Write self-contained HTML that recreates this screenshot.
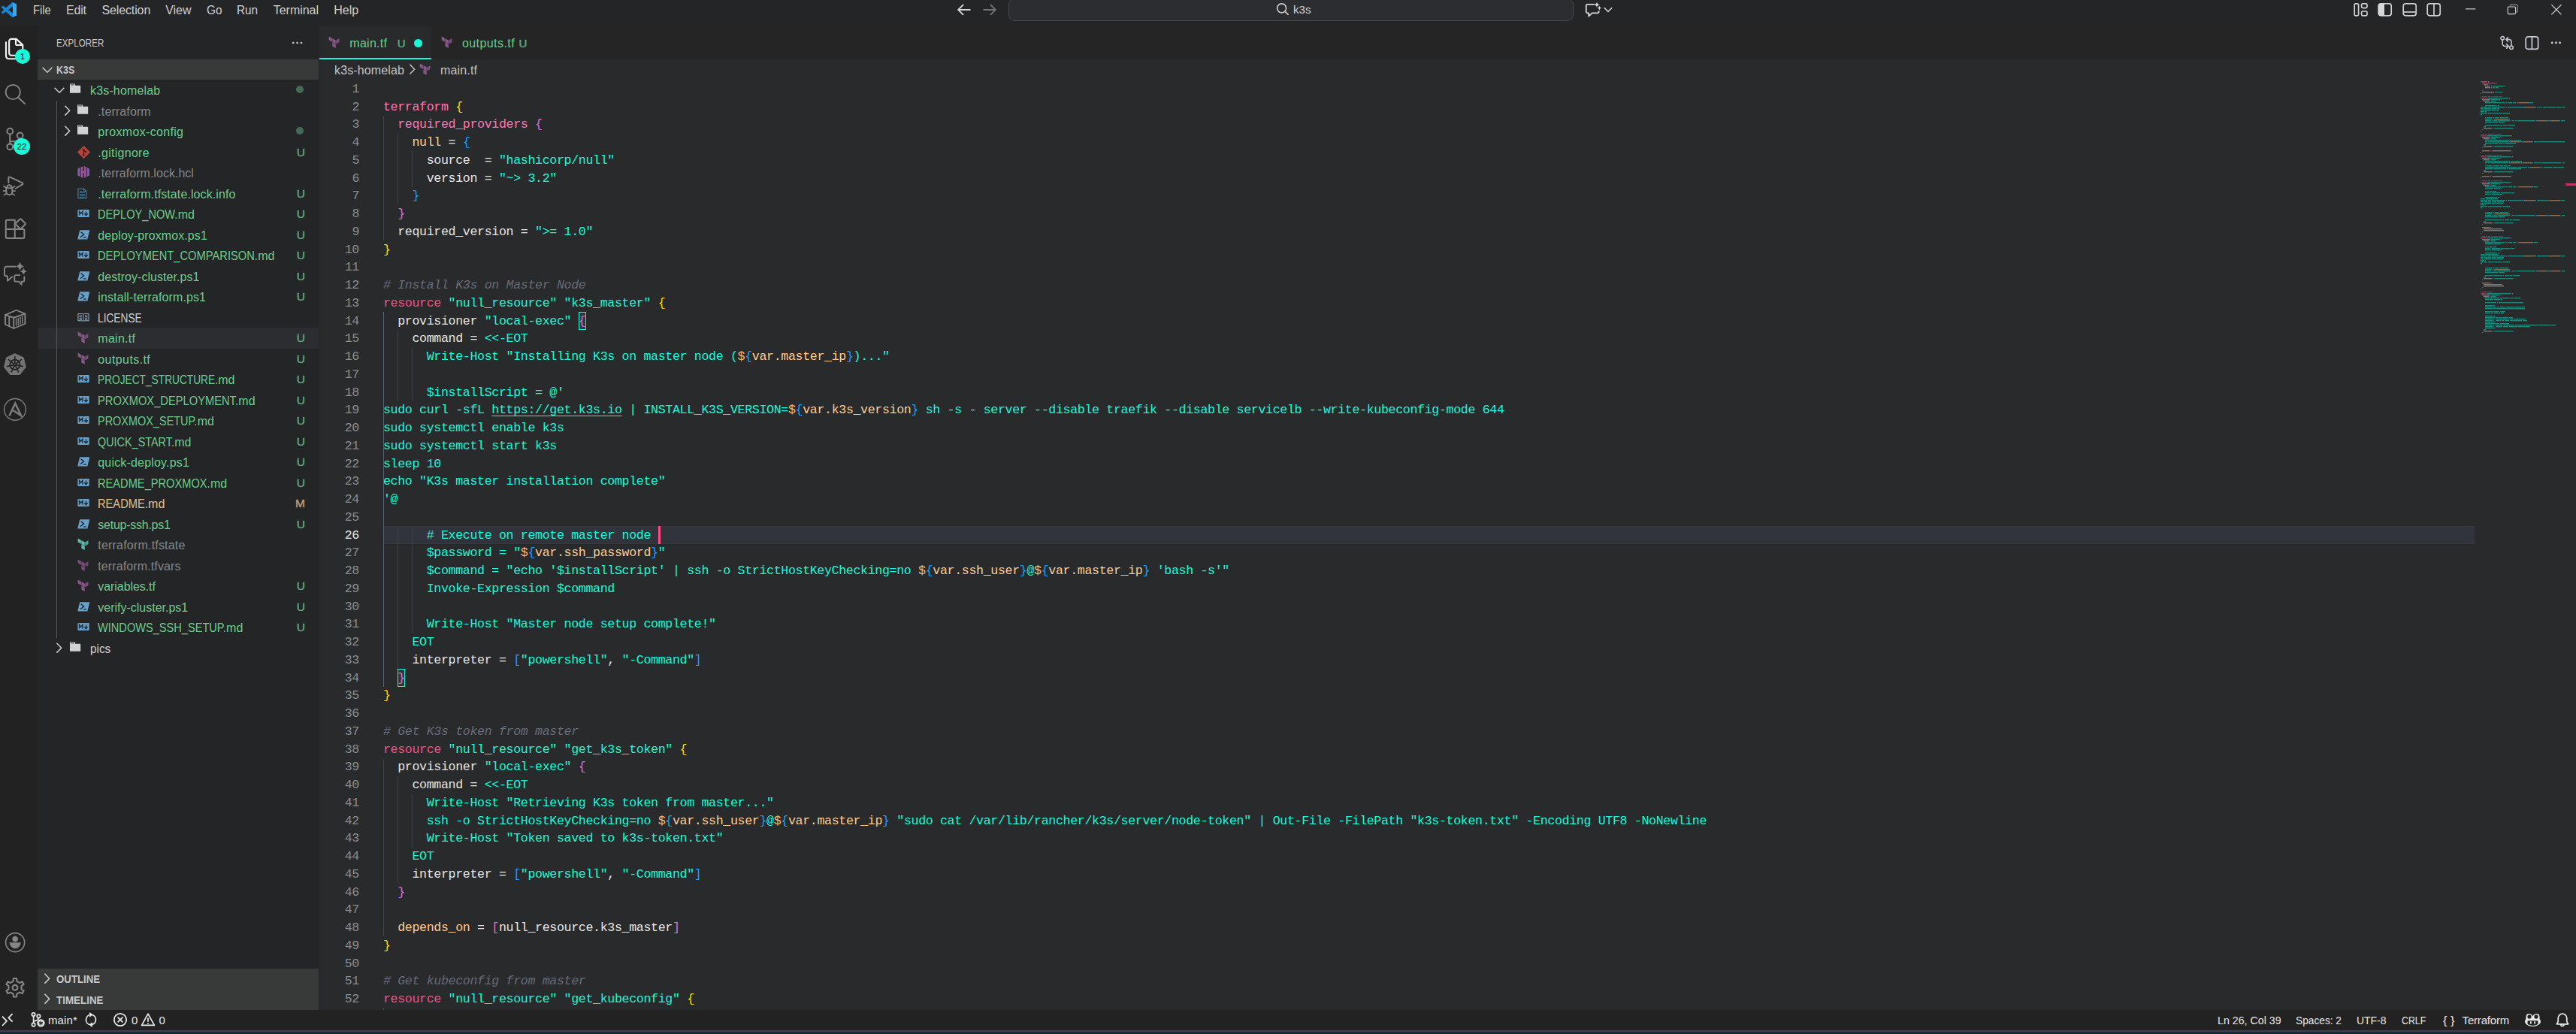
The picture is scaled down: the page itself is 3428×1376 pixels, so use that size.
<!DOCTYPE html>
<html lang="en"><head><meta charset="utf-8"><title>main.tf - k3s - Visual Studio Code</title>
<style>
html,body{margin:0;padding:0;background:#142a34;}
body{width:3428px;height:1376px;overflow:hidden;font-family:"Liberation Sans",sans-serif;}
#app{position:relative;width:3428px;height:1376px;overflow:hidden;background:#292a2b;}
#app div,#app span,#app svg{position:absolute;box-sizing:border-box;}
#app span{white-space:pre;}
.cl span{position:static !important;}

/* title bar */
#titlebar{left:0;top:0;width:3428px;height:35px;background:#242527;}
.menu{top:3px;height:22px;line-height:22px;font-size:16px;color:#cfcfcf;}
#cmdcenter{left:1342px;top:-2px;width:752px;height:29.5px;border:1px solid #47484b;border-radius:8px;background:#2c2d30;}
.cc-text{left:378px;top:4px;line-height:20px;font-size:15.2px;color:#d0d0d0;}

/* activity bar */
#activitybar{left:0;top:35px;width:50px;height:1309px;background:#222222;}
.badge{border-radius:50%;background:#19f9d8;color:#111;font-size:11.5px;text-align:center;}

/* side bar */
#sidebar{left:50px;top:35px;width:375px;height:1309px;background:#242526;}
.sb-title{left:25px;top:10.6px;line-height:22px;font-size:13.6px;color:#c8c8c8;letter-spacing:0.1px;}
.sb-more{left:338px;top:14px;width:16px;height:16px;}
.pane-h{left:0;width:374px;height:27.5px;background:#383a39;}
.pane-t{left:25px;top:1.4px;line-height:27.5px;font-size:13.5px;font-weight:bold;color:#c8c8c8;}
#tree{left:0;top:71.25px;width:374px;height:780px;}
.row{left:0;width:374px;height:27.5px;}
.row.sel{background:#2c2d30;}
.fn{top:1px;line-height:27.5px;font-size:16px;}
.fi{top:3px;width:20px;height:20px;}
.tw{top:4px;width:20px;height:20px;}
.g{color:#6dcd8f;}
.dim{color:#85878a;}
.n{color:#cfcfcf;}
.m{color:#e2c08d;}
.bdg{left:336px;top:0;width:20px;text-align:right;line-height:27.5px;font-size:15.5px;-webkit-text-stroke:0.5px currentColor;}
.bdg.g{color:#5fa57a;}
.bdg.m{color:#b89c72;}
.bdot{left:343.7px;top:8px;width:10px;height:10px;border-radius:50%;background:#456b56;}
.guide{left:24.9px;top:27.5px;width:1px;height:715px;background:#56575a;z-index:2;}

/* tabs */
#tabs{left:425px;top:35px;width:3003px;height:43.75px;background:#252526;}
.tab{top:0;height:43.75px;}
.tab.active{background:#292a2b;border-bottom:2.5px solid #19f9d8;}
.ti{top:10.8px;width:20px;height:20px;}
.tl{top:0;line-height:45px;font-size:16px;color:#6dcd8f;}
.tu{top:-0.5px;line-height:45px;font-size:15px;color:#5fa57a;-webkit-text-stroke:0.5px currentColor;}
.tdot{left:126px;top:16.5px;width:11px;height:11px;border-radius:50%;background:#19f9d8;}

/* breadcrumbs */
#crumbs{left:425px;top:78.75px;width:3003px;height:27.5px;background:#292a2b;}
.cr{top:1px;line-height:27.5px;font-size:16px;color:#c4c4c4;letter-spacing:-0.15px;}
.crsep{left:113.5px;top:4px;width:20px;height:20px;}
.cri{left:133px;top:3.5px;width:20px;height:20px;}

/* editor */
#editor{left:425px;top:106.25px;width:3003px;height:1237.75px;background:#292a2b;overflow:hidden;
 font-family:"Liberation Mono",monospace;font-size:16.6px;letter-spacing:-0.335px;}
.ln{left:0;margin-top:0.5px;width:53px;height:23.75px;line-height:23.75px;text-align:right;color:#8b8d91;white-space:pre;}
.ln.cur{color:#e6e6e6;}
.cl{left:85px;margin-top:0.5px;height:23.75px;line-height:23.75px;color:#e6e6e6;white-space:pre;}
.curline{left:85px;width:2783px;height:23.75px;background:#31343c;border-top:1.25px solid #34373f;border-bottom:1.25px solid #34373f;}
.ig{width:1.25px;background:#3d3f4a;}
.ig.act{background:#5c5f73;}
.cursor{width:2.5px;height:23.75px;background:#ff4b82;}
.k{color:#ff4b82;}
.k2{color:#ff75b5;}
.s,.u{color:#19f9d8;}
.u{text-decoration:underline;text-underline-offset:3px;}
.v{color:#ffcc95;}
.d{color:#ffb86c;}
.c{color:#676b79;font-style:italic;}
.b1{color:#ffd700;}
.b2,.bx2{color:#da70d6;}
.b3{color:#179fff;}
.bm{width:10.1px;height:23.75px;border:1.25px solid #19f9d8;background:#2c3836;}
#minimap{left:2868px;top:-0.25px;}
.ovr{left:2989px;top:137.5px;width:14px;height:3px;background:#c2356b;}

/* status bar */
#statusbar{left:0;top:1344px;width:3428px;height:27px;background:#222222;}
.st{top:0;line-height:27px;font-size:15px;color:#e8e8e8;}
#strip1{left:0;top:1371px;width:3428px;height:1.5px;background:#36444b;}
#strip2{left:0;top:1372.5px;width:3428px;height:3.5px;background:#142a34;}

</style></head>
<body>
<div id="app">
<div id="titlebar"><svg style="left:1.8px;top:2.5px" width="20" height="20" viewBox="0 0 24 24" ><path fill="#1389dc" d="M23.15 2.587L18.21.21a1.494 1.494 0 0 0-1.705.29l-9.46 8.63-4.12-3.128a.999.999 0 0 0-1.276.057L.327 7.261A1 1 0 0 0 .326 8.74L3.899 12 .326 15.26a1 1 0 0 0 .001 1.479L1.65 17.94a.999.999 0 0 0 1.276.057l4.12-3.128 9.46 8.63a1.492 1.492 0 0 0 1.704.29l4.942-2.377A1.5 1.500 0 0 0 24 20.060V3.939a1.500 1.500 0 0 0-.85-1.352zm-5.146 14.861L10.826 12l7.178-5.448v10.896z"/><path fill="#33a9f7" d="M18.004 6.552V0.150L18.210 0.210L23.150 2.587A1.500 1.500 0 0 1 24 3.939V20.060a1.500 1.500 0 0 1-.85 1.352L18.210 23.790L18.004 23.850z"/></svg><span class="menu" style="left:44.00px;font-size:16px;transform:scaleX(0.9193);transform-origin:0 50%">File</span><span class="menu" style="left:88.00px;font-size:16px;letter-spacing:-0.193px">Edit</span><span class="menu" style="left:135.40px;font-size:16px;letter-spacing:-0.116px">Selection</span><span class="menu" style="left:220.30px;font-size:16px;letter-spacing:-0.064px">View</span><span class="menu" style="left:274.50px;font-size:16px;transform:scaleX(0.9605);transform-origin:0 50%">Go</span><span class="menu" style="left:315.40px;font-size:16px;transform:scaleX(0.9571);transform-origin:0 50%">Run</span><span class="menu" style="left:363.80px;font-size:16px;letter-spacing:-0.038px">Terminal</span><span class="menu" style="left:444.30px;font-size:16px;letter-spacing:-0.002px">Help</span><svg style="left:1273px;top:3px" width="20" height="20" viewBox="0 0 20 20" ><path d="M18.5 10H2.5M9 3.2L2.2 10L9 16.8" fill="none" stroke="#d4d4d4" stroke-width="1.9"/></svg><svg style="left:1307px;top:3px" width="20" height="20" viewBox="0 0 20 20" ><path d="M1.5 10H17.5M11 3.2L17.8 10L11 16.8" fill="none" stroke="#747474" stroke-width="1.9"/></svg><div id="cmdcenter"><svg style="left:355px;top:3.5px" width="18" height="18" viewBox="0 0 18 18" ><circle cx="7.6" cy="7.8" r="6" fill="none" stroke="#c8c8c8" stroke-width="1.7"/><path d="M12 12.2L16.6 16.8" stroke="#c8c8c8" stroke-width="1.9" fill="none"/></svg><span class="cc-text">k3s</span></div><svg style="left:2108px;top:2px" width="24" height="22" viewBox="0 0 24 22" ><path d="M13.800 3.900H4.300a1.500 1.500 0 0 0-1.500 1.500v8.400a1.500 1.500 0 0 0 1.500 1.500h1.900v4.300l4.600-4.300h7.300a1.500 1.500 0 0 0 1.500-1.500v-1.500" fill="none" stroke="#d8d8d8" stroke-width="1.800" stroke-linejoin="round"/><path d="M17 0.4Q17.456 3.744 20.8 4.2Q17.456 4.656 17 8Q16.544 4.656 13.2 4.2Q16.544 3.744 17 0.4Z" fill="#e0e0e0"/><path d="M20.4 5.7Q20.748 8.252 23.3 8.6Q20.748 8.948 20.4 11.5Q20.052 8.948 17.5 8.6Q20.052 8.252 20.4 5.7Z" fill="#e0e0e0"/></svg><svg style="left:2134.4px;top:7px" width="12" height="12" viewBox="0 0 12 12" ><path d="M0.800 3.300L6 8.400L11.200 3.300" fill="none" stroke="#d4d4d4" stroke-width="1.500"/></svg><svg style="left:3131.5px;top:3.2px" width="20" height="20" viewBox="0 0 20 20" ><rect x="1.2" y="1.8" width="5.4" height="16" rx="1.6" fill="none" stroke="#d0d0d0" stroke-width="1.7"/><rect x="10.6" y="1.8" width="7.4" height="5.8" rx="1.6" fill="none" stroke="#d0d0d0" stroke-width="1.7"/><rect x="10.6" y="12" width="7.4" height="5.8" rx="1.6" fill="none" stroke="#d0d0d0" stroke-width="1.7"/></svg><svg style="left:3164px;top:3.2px" width="20" height="20" viewBox="0 0 20 20" ><rect x="1.2" y="1.8" width="17" height="16" rx="3" fill="none" stroke="#d0d0d0" stroke-width="1.7"/><path d="M1.2 4.8a3 3 0 0 1 3-3H9v16H4.2a3 3 0 0 1-3-3z" fill="#d8d8d8"/></svg><svg style="left:3196.5px;top:3.2px" width="20" height="20" viewBox="0 0 20 20" ><rect x="1.2" y="1.8" width="17" height="16" rx="3" fill="none" stroke="#d0d0d0" stroke-width="1.7"/><path d="M1.2 13H18.2" fill="none" stroke="#d0d0d0" stroke-width="1.7"/></svg><svg style="left:3229px;top:3.2px" width="20" height="20" viewBox="0 0 20 20" ><rect x="1.2" y="1.8" width="17" height="16" rx="3" fill="none" stroke="#d0d0d0" stroke-width="1.7"/><path d="M10 1.8V17.8" fill="none" stroke="#d0d0d0" stroke-width="1.7"/></svg><svg style="left:3280px;top:5px" width="16" height="16" viewBox="0 0 16 16" ><path d="M1 6.9H14.4" stroke="#d8d8d8" stroke-width="1.1" fill="none"/></svg><svg style="left:3335px;top:5px" width="18" height="16" viewBox="0 0 18 16" ><rect x="2.2" y="4" width="10.4" height="9.6" rx="1.6" fill="none" stroke="#d8d8d8" stroke-width="1.1"/><path d="M5 4V3.4a2 2 0 0 1 2-2h6.4a2 2 0 0 1 2 2v5.8a2 2 0 0 1-2 2H12.6" fill="none" stroke="#8a8a8a" stroke-width="1.1"/></svg><svg style="left:3393px;top:4px" width="18" height="18" viewBox="0 0 18 18" ><path d="M2.4 2.4L15.4 15.4M15.4 2.4L2.4 15.4" stroke="#e0e0e0" stroke-width="1.15" fill="none"/></svg></div>
<div id="activitybar"><svg style="left:5px;top:15px;overflow:visible" width="30" height="30" viewBox="0 0 24 24" fill="none" stroke="#f4f4f4" stroke-width="1.7" stroke-linejoin="round" stroke-linecap="round"><path d="M13.400 1.500H8.200a2.500 2.500 0 0 0-2.500 2.500v12.500a2.500 2.500 0 0 0 2.500 2.500h9.500a2.500 2.500 0 0 0 2.500-2.500V7.900z"/><path d="M12.800 1.700v4.800a1.500 1.500 0 0 0 1.500 1.500h5.700"/><path d="M2.400 5V19.600a3 3 0 0 0 3 3H15"/></svg><svg style="left:5px;top:75px;overflow:visible" width="30" height="30" viewBox="0 0 24 24" fill="none" stroke="#868686" stroke-width="1.5" stroke-linejoin="round" stroke-linecap="round"><circle cx="9.8" cy="10" r="7.7"/><path d="M15.4 15.8l7 6.6"/></svg><svg style="left:5px;top:135px;overflow:visible" width="30" height="30" viewBox="0 0 24 24" fill="none" stroke="#868686" stroke-width="1.6" stroke-linejoin="round" stroke-linecap="round"><circle cx="6.600" cy="3.700" r="3.100"/><circle cx="6.600" cy="20.200" r="3.100"/><circle cx="17.300" cy="8.300" r="3.100"/><path d="M6.600 6.800v10.300M17.300 11.400a3.200 3.200 0 0 1-3.200 3.200H6.600"/></svg><svg style="left:5px;top:195px;overflow:visible" width="30" height="30" viewBox="0 0 24 24" fill="none" stroke="#868686" stroke-width="1.6" stroke-linejoin="round" stroke-linecap="round"><path d="M5.100 10.400V5.400a1 1 0 0 1 1.500-.9L19.900 10.700a0.900 0.900 0 0 1 0 1.600L12.600 16.600"/><path d="M2.600 16.200h6.500v3.900a3.250 3.250 0 0 1-6.500 0zM3.500 16.200v-.9a2.350 2.350 0 0 1 4.700 0v.9"/><path d="M2.600 16L0 14.200M2.600 19.300H-0.400M2.900 22L0.200 23.700M9.100 16l2.600-1.800M9.100 19.300h3M8.800 22l2.700 1.700" stroke-width="1.300"/></svg><svg style="left:5px;top:255px;overflow:visible" width="30" height="30" viewBox="0 0 24 24" fill="none" stroke="#868686" stroke-width="1.6" stroke-linejoin="round" stroke-linecap="round"><path d="M11.800 2.200H3.400a1.200 1.200 0 0 0-1.200 1.200V20.400a1.200 1.200 0 0 0 1.200 1.200H20.700a1.200 1.200 0 0 0 1.200-1.200V13.100a1.200 1.200 0 0 0-1.200-1.200H2.200M11.800 2.200V21.600"/><rect x="-4" y="-4" width="8" height="8" rx="1" transform="translate(17.800 6.300) rotate(45)"/></svg><svg style="left:5px;top:315px;overflow:visible" width="30" height="30" viewBox="0 0 24 24" fill="none" stroke="#868686" stroke-width="1.5" stroke-linejoin="round" stroke-linecap="round"><path d="M12.400 3.800H3a2.200 2.200 0 0 0-2.200 2.200v5.800a2.200 2.200 0 0 0 2.200 2.200h1v5l5-4.400"/><path d="M17 12.900h-4a1.600 1.600 0 0 0-1.600 1.600v3.600a1.600 1.600 0 0 0 1.600 1.600h3l2.900 3.300v-3.300h1.400a1.600 1.600 0 0 0 1.600-1.600v-3.500"/><path d="M17.2 -0.3Q17.785 3.015 21.1 3.6Q17.785 4.185 17.2 7.5Q16.615 4.185 13.3 3.6Q16.615 3.015 17.2 -0.3Z" fill="#868686" stroke="#868686" stroke-width="0.6"/><path d="M21.1 6Q21.55 8.55 24.1 9Q21.55 9.45 21.1 12Q20.65 9.45 18.1 9Q20.65 8.55 21.1 6Z" fill="#868686" stroke="#868686" stroke-width="0.6"/></svg><svg style="left:5px;top:375px;overflow:visible" width="30" height="30" viewBox="0 0 24 24" fill="none" stroke="#868686" stroke-width="1.5" stroke-linejoin="round" stroke-linecap="round"><path d="M13.400 2.200L22.700 6.100V16.600L10.600 21.600L1.600 17.400V7.300Z"/><path d="M1.600 7.300L10.600 10.200L22.700 6.100M10.600 10.200V21.600M5.800 8.800V19.200"/><path d="M13.200 11.300V18.500M15.400 10.500V17.700M17.600 9.800V16.900M19.800 9V16.100" stroke-width="1.100"/></svg><svg style="left:5px;top:435px;overflow:visible" width="30" height="30" viewBox="0 0 24 24" fill="none" stroke="#868686" stroke-width="1.5" stroke-linejoin="round" stroke-linecap="round"><path d="M11.90 1.70L20.11 5.65L22.14 14.54L16.46 21.66L7.34 21.66L1.66 14.54L3.69 5.65Z" fill="#747474" stroke="#747474" stroke-width="3"/><circle cx="11.900" cy="12.200" r="5.300" stroke="#222" stroke-width="1.500"/><path d="M11.9 12.2L11.90 3.60M11.9 12.2L18.62 6.84M11.9 12.2L20.28 14.11M11.9 12.2L15.63 19.95M11.9 12.2L8.17 19.95M11.9 12.2L3.52 14.11M11.9 12.2L5.18 6.84" stroke="#222" stroke-width="1.300"/><circle cx="11.900" cy="12.200" r="1.400" fill="#747474" stroke="#222" stroke-width="1.4"/></svg><svg style="left:5px;top:495px;overflow:visible" width="30" height="30" viewBox="0 0 24 24" fill="none" stroke="#868686" stroke-width="1.5" stroke-linejoin="round" stroke-linecap="round"><circle cx="12" cy="11.900" r="11.500" stroke-width="1.100" stroke="#7c7c7c"/><path d="M5.900 18.800L12.200 5.400L18.400 18.400L10 12.900" stroke-width="2" stroke="#7c7c7c" stroke-linejoin="miter" stroke-linecap="butt"/></svg><svg style="left:5px;top:1203.75px;overflow:visible" width="30" height="30" viewBox="0 0 24 24" fill="none" stroke="#868686" stroke-width="1.5" stroke-linejoin="round" stroke-linecap="round"><circle cx="12.100" cy="12.100" r="10" stroke-width="1.300"/><circle cx="12.100" cy="8.400" r="2.900" fill="#868686" stroke-width="0.4"/><path d="M6.300 12.300H17.900A5.800 6.200 0 0 1 6.300 12.300Z" fill="#868686" stroke-width="0.4"/></svg><svg style="left:5px;top:1263.75px;overflow:visible" width="30" height="30" viewBox="0 0 24 24" fill="none" stroke="#868686" stroke-width="1.5" stroke-linejoin="round" stroke-linecap="round"><path d="M10.05 5.48L10.35 2.44L13.65 2.44L13.95 5.48L16.85 7.15L19.63 5.89L21.28 8.75L18.80 10.53L18.80 13.87L21.28 15.65L19.63 18.51L16.85 17.25L13.95 18.92L13.65 21.96L10.35 21.96L10.05 18.92L7.15 17.25L4.37 18.51L2.72 15.65L5.20 13.87L5.20 10.53L2.72 8.75L4.37 5.89L7.15 7.15Z" stroke-width="1.700"/><circle cx="12" cy="12.200" r="2.700" stroke-width="1.700"/></svg><div class="badge" style="left:20px;top:29.8px;width:20px;height:20px;line-height:20px;font-size:11.5px">1</div><div class="badge" style="left:18px;top:149.1px;width:22px;height:22px;line-height:22px;font-size:11.5px">22</div></div>
<div id="sidebar"><span class="sb-title" style="left:25.00px;font-size:14.6px;transform:scaleX(0.7888);transform-origin:0 50%">EXPLORER</span><div class="sb-more"><svg width="16" height="16" viewBox="0 0 16 16"><circle cx="2.2" cy="8" r="1.35" fill="#c8c8c8"/><circle cx="7.6" cy="8" r="1.35" fill="#c8c8c8"/><circle cx="13" cy="8" r="1.35" fill="#c8c8c8"/></svg></div><div class="pane-h" style="top:43.75px"><span style="left:2.5px;top:3.75px;width:20px;height:20px"><svg width="20" height="20" viewBox="0 0 20 20"><path d="M3.6 6.8L10 13.2L16.4 6.8" fill="none" stroke="#c8c8c8" stroke-width="1.6"/></svg></span><span class="pane-t" style="left:25.00px;font-size:14.5px;transform:scaleX(0.8576);transform-origin:0 50%">K3S</span></div><div id="tree"><div class="guide"></div><div class="row" style="top:0px"><span class="tw" style="left:19px"><svg width="20" height="20" viewBox="0 0 20 20"><path d="M3.6 6.8L10 13.2L16.4 6.8" fill="none" stroke="#c8c8c8" stroke-width="1.6"/></svg></span><span class="fi" style="left:43px"><svg width="20" height="20" viewBox="0 0 20 20"><path d="M-0.1 3.200a0.600 0.600 0 0 1 .6-.6h6a0.600 0.600 0 0 1 .6.6v1.550h6.500a0.600 0.600 0 0 1 .6.6v8.800a0.600 0.600 0 0 1-.6.6H0.500a0.600 0.600 0 0 1-.6-.6z" fill="#d2d2d2"/><path d="M1 3.900h4.800" stroke="#252628" stroke-width="0.9"/></svg></span><span class="fn g" style="left:70.00px;font-size:16px;letter-spacing:0.159px">k3s-homelab</span><span class="bdot"></span></div><div class="row" style="top:27.5px"><span class="tw" style="left:29.5px"><svg width="20" height="20" viewBox="0 0 20 20"><path d="M6.400 2.800L12.600 9.200L6.400 15.600" fill="none" stroke="#c8c8c8" stroke-width="1.6"/></svg></span><span class="fi" style="left:52.5px"><svg width="20" height="20" viewBox="0 0 20 20"><path d="M-0.1 3.200a0.600 0.600 0 0 1 .6-.6h6a0.600 0.600 0 0 1 .6.6v1.550h6.500a0.600 0.600 0 0 1 .6.6v8.800a0.600 0.600 0 0 1-.6.6H0.500a0.600 0.600 0 0 1-.6-.6z" fill="#d2d2d2"/><path d="M1 3.900h4.800" stroke="#252628" stroke-width="0.9"/></svg></span><span class="fn dim" style="left:80.30px;font-size:16px;letter-spacing:0.117px">.terraform</span></div><div class="row" style="top:55px"><span class="tw" style="left:29.5px"><svg width="20" height="20" viewBox="0 0 20 20"><path d="M6.400 2.800L12.600 9.200L6.400 15.600" fill="none" stroke="#c8c8c8" stroke-width="1.6"/></svg></span><span class="fi" style="left:52.5px"><svg width="20" height="20" viewBox="0 0 20 20"><path d="M-0.1 3.200a0.600 0.600 0 0 1 .6-.6h6a0.600 0.600 0 0 1 .6.6v1.550h6.500a0.600 0.600 0 0 1 .6.6v8.800a0.600 0.600 0 0 1-.6.6H0.500a0.600 0.600 0 0 1-.6-.6z" fill="#d2d2d2"/><path d="M1 3.900h4.800" stroke="#252628" stroke-width="0.9"/></svg></span><span class="fn g" style="left:80.30px;font-size:16px;letter-spacing:0.333px">proxmox-config</span><span class="bdot"></span></div><div class="row" style="top:82.5px"><span class="fi" style="left:52.5px"><svg width="20" height="20" viewBox="0 0 20 20"><path d="M8.500 3.200L15.800 10.500L8.500 17.800L1.200 10.500Z" fill="#b9413c" stroke="#b9413c" stroke-width="1.800" stroke-linejoin="round"/><path d="M6.800 5.800L10.800 9.800M8.400 7.600V14" stroke="#3a1513" stroke-width="1.100" fill="none"/><circle cx="8.400" cy="14.200" r="1.200" fill="#3a1513"/><circle cx="11" cy="10" r="1.200" fill="#3a1513"/><circle cx="8.400" cy="7.600" r="1.100" fill="#3a1513"/></svg></span><span class="fn g" style="left:80.30px;font-size:16px;letter-spacing:0.275px">.gitignore</span><span class="bdg g">U</span></div><div class="row" style="top:110px"><span class="fi" style="left:52.5px"><svg width="20" height="20" viewBox="0 0 20 20"><path d="M3.600 3.700L0.400 5.600v8.800l3.200 1.900zM12.700 3.700l3.200 1.900v8.800l-3.200 1.900z" fill="#7b5ea7"/><path d="M4.600 3.500l2.800-1.300v6.600h1.500V1.900l2.800 1.300v13.300l-2.800 1.300v-6.600H7.400v6.900l-2.800-1.300z" fill="#9c5290"/></svg></span><span class="fn dim" style="left:80.30px;font-size:16px;letter-spacing:0.026px">.terraform.lock.hcl</span></div><div class="row" style="top:137.5px"><span class="fi" style="left:52.5px"><svg width="20" height="20" viewBox="0 0 20 20"><path d="M0.900 4h7.400l3.500 3.500v9.500H0.900z" fill="none" stroke="#4d7f9c" stroke-width="1.100"/><path d="M8.200 4v3.600h3.600" fill="none" stroke="#4d7f9c" stroke-width="1"/><path d="M2.800 9.400h7M2.800 11.400h7M2.800 13.400h7M2.800 15.300h7M2.800 7.400h3.600" stroke="#4d7f9c" stroke-width="0.900"/></svg></span><span class="fn g" style="left:80.30px;font-size:16px;letter-spacing:0.096px">.terraform.tfstate.lock.info</span><span class="bdg g">U</span></div><div class="row" style="top:165px"><span class="fi" style="left:52.5px"><svg width="20" height="20" viewBox="0 0 20 20"><rect x="0.4" y="5.100" width="15.300" height="9.800" rx="1" fill="#6aa0c6"/><path d="M2.600 12.700V7.400l2.200 2.900L7 7.400v5.300" fill="none" stroke="#1b3448" stroke-width="1.500"/><path d="M11.500 7.200v4.600M9.300 10.200l2.200 2.600L13.700 10.200" fill="none" stroke="#1b3448" stroke-width="1.500"/></svg></span><span class="fn g" style="left:80.30px;font-size:16px;transform:scaleX(0.9131);transform-origin:0 50%">DEPLOY_NOW.</span><span class="fn g" style="left:186.67px;font-size:16px;transform:scaleX(1.0000);transform-origin:0 50%">md</span><span class="bdg g">U</span></div><div class="row" style="top:192.5px"><span class="fi" style="left:52.5px"><svg width="20" height="20" viewBox="0 0 20 20"><path d="M3.600 4.300H15.700a.5.5 0 0 1 .5.650L13.500 15.900a.8.8 0 0 1-.8.600H0.900a.5.5 0 0 1-.5-.65L3 4.900a.8.8 0 0 1 .6-.6z" fill="#6aa0c6"/><path d="M4.600 6.800l4 3.200L3.800 13.800" fill="none" stroke="#16283a" stroke-width="1.400"/><path d="M8 14h3.800" stroke="#16283a" stroke-width="1.300"/></svg></span><span class="fn g" style="left:80.30px;font-size:16px;letter-spacing:0.084px">deploy-proxmox.ps1</span><span class="bdg g">U</span></div><div class="row" style="top:220px"><span class="fi" style="left:52.5px"><svg width="20" height="20" viewBox="0 0 20 20"><rect x="0.4" y="5.100" width="15.300" height="9.800" rx="1" fill="#6aa0c6"/><path d="M2.600 12.700V7.400l2.200 2.900L7 7.400v5.300" fill="none" stroke="#1b3448" stroke-width="1.500"/><path d="M11.500 7.200v4.600M9.300 10.200l2.200 2.600L13.700 10.200" fill="none" stroke="#1b3448" stroke-width="1.500"/></svg></span><span class="fn g" style="left:80.30px;font-size:16px;transform:scaleX(0.9189);transform-origin:0 50%">DEPLOYMENT_COMPARISON.</span><span class="fn g" style="left:293.27px;font-size:16px;transform:scaleX(1.0000);transform-origin:0 50%">md</span><span class="bdg g">U</span></div><div class="row" style="top:247.5px"><span class="fi" style="left:52.5px"><svg width="20" height="20" viewBox="0 0 20 20"><path d="M3.600 4.300H15.700a.5.5 0 0 1 .5.650L13.500 15.900a.8.8 0 0 1-.8.600H0.900a.5.5 0 0 1-.5-.65L3 4.900a.8.8 0 0 1 .6-.6z" fill="#6aa0c6"/><path d="M4.600 6.800l4 3.200L3.800 13.800" fill="none" stroke="#16283a" stroke-width="1.400"/><path d="M8 14h3.800" stroke="#16283a" stroke-width="1.300"/></svg></span><span class="fn g" style="left:80.30px;font-size:16px;letter-spacing:0.045px">destroy-cluster.ps1</span><span class="bdg g">U</span></div><div class="row" style="top:275px"><span class="fi" style="left:52.5px"><svg width="20" height="20" viewBox="0 0 20 20"><path d="M3.600 4.300H15.700a.5.5 0 0 1 .5.650L13.500 15.900a.8.8 0 0 1-.8.600H0.900a.5.5 0 0 1-.5-.65L3 4.900a.8.8 0 0 1 .6-.6z" fill="#6aa0c6"/><path d="M4.600 6.800l4 3.200L3.800 13.800" fill="none" stroke="#16283a" stroke-width="1.400"/><path d="M8 14h3.800" stroke="#16283a" stroke-width="1.300"/></svg></span><span class="fn g" style="left:80.30px;font-size:16px;letter-spacing:0.116px">install-terraform.ps1</span><span class="bdg g">U</span></div><div class="row" style="top:302.5px"><span class="fi" style="left:52.5px"><svg width="20" height="20" viewBox="0 0 20 20"><path d="M0.900 5.600h5.800a1.300 1.300 0 0 1 1.300 1a1.300 1.300 0 0 1 1.300-1h5.800v9.200H9.300a1.300 1.300 0 0 0-1.300.7a1.300 1.300 0 0 0-1.300-.7H0.900z" fill="none" stroke="#8ab4d2" stroke-width="1"/><path d="M8 6.600v8.600M2.600 8h3.400M2.600 9.800h3.400M2.600 11.600h3.400M2.600 13.300h3.400M10 8h3.400M10 9.800h3.400M10 11.600h3.400M10 13.300h3.400" stroke="#8ab4d2" stroke-width="0.900"/></svg></span><span class="fn n" style="left:80.30px;font-size:16px;transform:scaleX(0.8573);transform-origin:0 50%">LICENSE</span></div><div class="row sel" style="top:330px"><span class="fi" style="left:52.5px"><svg width="20" height="20" viewBox="0 0 20 20"><svg x="0.4" y="2.2" width="14.3" height="15.800" viewBox="1.44 0 21.12 24" preserveAspectRatio="none"><path d="M1.44 0v7.575l6.561 3.79V3.787zM8.72 4.23v7.575l6.561 3.787V8.018zm0 8.405v7.575L15.28 24v-7.578z" fill="#875785"/><path d="M22.56 4.227l-6.561 3.791v7.574l6.56-3.787z" fill="#7a4e7a"/></svg></svg></span><span class="fn g" style="left:80.30px;font-size:16px;letter-spacing:0.281px">main.tf</span><span class="bdg g">U</span></div><div class="row" style="top:357.5px"><span class="fi" style="left:52.5px"><svg width="20" height="20" viewBox="0 0 20 20"><svg x="0.4" y="2.2" width="14.3" height="15.800" viewBox="1.44 0 21.12 24" preserveAspectRatio="none"><path d="M1.44 0v7.575l6.561 3.79V3.787zM8.72 4.23v7.575l6.561 3.787V8.018zm0 8.405v7.575L15.28 24v-7.578z" fill="#875785"/><path d="M22.56 4.227l-6.561 3.791v7.574l6.56-3.787z" fill="#7a4e7a"/></svg></svg></span><span class="fn g" style="left:80.30px;font-size:16px;letter-spacing:0.408px">outputs.tf</span><span class="bdg g">U</span></div><div class="row" style="top:385px"><span class="fi" style="left:52.5px"><svg width="20" height="20" viewBox="0 0 20 20"><rect x="0.4" y="5.100" width="15.300" height="9.800" rx="1" fill="#6aa0c6"/><path d="M2.600 12.700V7.400l2.200 2.900L7 7.400v5.300" fill="none" stroke="#1b3448" stroke-width="1.500"/><path d="M11.500 7.200v4.600M9.300 10.200l2.200 2.600L13.700 10.200" fill="none" stroke="#1b3448" stroke-width="1.500"/></svg></span><span class="fn g" style="left:80.30px;font-size:16px;transform:scaleX(0.8569);transform-origin:0 50%">PROJECT_STRUCTURE.</span><span class="fn g" style="left:240.27px;font-size:16px;transform:scaleX(1.0000);transform-origin:0 50%">md</span><span class="bdg g">U</span></div><div class="row" style="top:412.5px"><span class="fi" style="left:52.5px"><svg width="20" height="20" viewBox="0 0 20 20"><rect x="0.4" y="5.100" width="15.300" height="9.800" rx="1" fill="#6aa0c6"/><path d="M2.600 12.700V7.400l2.200 2.900L7 7.400v5.300" fill="none" stroke="#1b3448" stroke-width="1.500"/><path d="M11.500 7.200v4.600M9.300 10.200l2.200 2.600L13.700 10.200" fill="none" stroke="#1b3448" stroke-width="1.500"/></svg></span><span class="fn g" style="left:80.30px;font-size:16px;transform:scaleX(0.9187);transform-origin:0 50%">PROXMOX_DEPLOYMENT.</span><span class="fn g" style="left:267.37px;font-size:16px;transform:scaleX(1.0000);transform-origin:0 50%">md</span><span class="bdg g">U</span></div><div class="row" style="top:440px"><span class="fi" style="left:52.5px"><svg width="20" height="20" viewBox="0 0 20 20"><rect x="0.4" y="5.100" width="15.300" height="9.800" rx="1" fill="#6aa0c6"/><path d="M2.600 12.700V7.400l2.200 2.900L7 7.400v5.300" fill="none" stroke="#1b3448" stroke-width="1.500"/><path d="M11.500 7.200v4.600M9.300 10.200l2.200 2.600L13.700 10.200" fill="none" stroke="#1b3448" stroke-width="1.500"/></svg></span><span class="fn g" style="left:80.30px;font-size:16px;transform:scaleX(0.9040);transform-origin:0 50%">PROXMOX_SETUP.</span><span class="fn g" style="left:212.67px;font-size:16px;transform:scaleX(1.0000);transform-origin:0 50%">md</span><span class="bdg g">U</span></div><div class="row" style="top:467.5px"><span class="fi" style="left:52.5px"><svg width="20" height="20" viewBox="0 0 20 20"><rect x="0.4" y="5.100" width="15.300" height="9.800" rx="1" fill="#6aa0c6"/><path d="M2.600 12.700V7.400l2.200 2.900L7 7.400v5.300" fill="none" stroke="#1b3448" stroke-width="1.500"/><path d="M11.500 7.200v4.600M9.300 10.200l2.200 2.600L13.700 10.200" fill="none" stroke="#1b3448" stroke-width="1.500"/></svg></span><span class="fn g" style="left:80.30px;font-size:16px;transform:scaleX(0.9006);transform-origin:0 50%">QUICK_START.</span><span class="fn g" style="left:182.27px;font-size:16px;transform:scaleX(1.0000);transform-origin:0 50%">md</span><span class="bdg g">U</span></div><div class="row" style="top:495px"><span class="fi" style="left:52.5px"><svg width="20" height="20" viewBox="0 0 20 20"><path d="M3.600 4.300H15.700a.5.5 0 0 1 .5.650L13.500 15.900a.8.8 0 0 1-.8.600H0.900a.5.5 0 0 1-.5-.65L3 4.900a.8.8 0 0 1 .6-.6z" fill="#6aa0c6"/><path d="M4.600 6.800l4 3.200L3.800 13.800" fill="none" stroke="#16283a" stroke-width="1.400"/><path d="M8 14h3.800" stroke="#16283a" stroke-width="1.300"/></svg></span><span class="fn g" style="left:80.30px;font-size:16px;letter-spacing:0.174px">quick-deploy.ps1</span><span class="bdg g">U</span></div><div class="row" style="top:522.5px"><span class="fi" style="left:52.5px"><svg width="20" height="20" viewBox="0 0 20 20"><rect x="0.4" y="5.100" width="15.300" height="9.800" rx="1" fill="#6aa0c6"/><path d="M2.600 12.700V7.400l2.200 2.900L7 7.400v5.300" fill="none" stroke="#1b3448" stroke-width="1.500"/><path d="M11.500 7.200v4.600M9.300 10.200l2.200 2.600L13.700 10.200" fill="none" stroke="#1b3448" stroke-width="1.500"/></svg></span><span class="fn g" style="left:80.30px;font-size:16px;transform:scaleX(0.9149);transform-origin:0 50%">README_PROXMOX.</span><span class="fn g" style="left:229.97px;font-size:16px;transform:scaleX(1.0000);transform-origin:0 50%">md</span><span class="bdg g">U</span></div><div class="row" style="top:550px"><span class="fi" style="left:52.5px"><svg width="20" height="20" viewBox="0 0 20 20"><rect x="0.4" y="5.100" width="15.300" height="9.800" rx="1" fill="#6aa0c6"/><path d="M2.600 12.700V7.400l2.200 2.900L7 7.400v5.300" fill="none" stroke="#1b3448" stroke-width="1.500"/><path d="M11.500 7.200v4.600M9.300 10.200l2.200 2.600L13.700 10.200" fill="none" stroke="#1b3448" stroke-width="1.500"/></svg></span><span class="fn m" style="left:80.30px;font-size:16px;transform:scaleX(0.9158);transform-origin:0 50%">README.</span><span class="fn m" style="left:147.07px;font-size:16px;transform:scaleX(1.0000);transform-origin:0 50%">md</span><span class="bdg m">M</span></div><div class="row" style="top:577.5px"><span class="fi" style="left:52.5px"><svg width="20" height="20" viewBox="0 0 20 20"><path d="M3.600 4.300H15.700a.5.5 0 0 1 .5.650L13.500 15.900a.8.8 0 0 1-.8.600H0.900a.5.5 0 0 1-.5-.65L3 4.900a.8.8 0 0 1 .6-.6z" fill="#6aa0c6"/><path d="M4.600 6.800l4 3.200L3.800 13.800" fill="none" stroke="#16283a" stroke-width="1.400"/><path d="M8 14h3.800" stroke="#16283a" stroke-width="1.300"/></svg></span><span class="fn g" style="left:80.30px;font-size:16px;letter-spacing:-0.251px">setup-ssh.ps1</span><span class="bdg g">U</span></div><div class="row" style="top:605px"><span class="fi" style="left:52.5px"><svg width="20" height="20" viewBox="0 0 20 20"><svg x="0.4" y="2.2" width="14.3" height="15.800" viewBox="1.44 0 21.12 24" preserveAspectRatio="none"><path d="M1.44 0v7.575l6.561 3.79V3.787zM8.72 4.23v7.575l6.561 3.787V8.018zm0 8.405v7.575L15.28 24v-7.578z" fill="#62bcae"/><path d="M22.56 4.227l-6.561 3.791v7.574l6.56-3.787z" fill="#52a698"/></svg></svg></span><span class="fn dim" style="left:80.30px;font-size:16px;letter-spacing:0.199px">terraform.tfstate</span></div><div class="row" style="top:632.5px"><span class="fi" style="left:52.5px"><svg width="20" height="20" viewBox="0 0 20 20"><svg x="0.4" y="2.2" width="14.3" height="15.800" viewBox="1.44 0 21.12 24" preserveAspectRatio="none"><path d="M1.44 0v7.575l6.561 3.79V3.787zM8.72 4.23v7.575l6.561 3.787V8.018zm0 8.405v7.575L15.28 24v-7.578z" fill="#7a4c7c"/><path d="M22.56 4.227l-6.561 3.791v7.574l6.56-3.787z" fill="#6c4470"/></svg></svg></span><span class="fn dim" style="left:80.30px;font-size:16px;letter-spacing:0.115px">terraform.tfvars</span></div><div class="row" style="top:660px"><span class="fi" style="left:52.5px"><svg width="20" height="20" viewBox="0 0 20 20"><svg x="0.4" y="2.2" width="14.3" height="15.800" viewBox="1.44 0 21.12 24" preserveAspectRatio="none"><path d="M1.44 0v7.575l6.561 3.79V3.787zM8.72 4.23v7.575l6.561 3.787V8.018zm0 8.405v7.575L15.28 24v-7.578z" fill="#875785"/><path d="M22.56 4.227l-6.561 3.791v7.574l6.56-3.787z" fill="#7a4e7a"/></svg></svg></span><span class="fn g" style="left:80.30px;font-size:16px;letter-spacing:-0.070px">variables.tf</span><span class="bdg g">U</span></div><div class="row" style="top:687.5px"><span class="fi" style="left:52.5px"><svg width="20" height="20" viewBox="0 0 20 20"><path d="M3.600 4.300H15.700a.5.5 0 0 1 .5.650L13.500 15.900a.8.8 0 0 1-.8.600H0.900a.5.5 0 0 1-.5-.65L3 4.900a.8.8 0 0 1 .6-.6z" fill="#6aa0c6"/><path d="M4.600 6.800l4 3.200L3.800 13.800" fill="none" stroke="#16283a" stroke-width="1.400"/><path d="M8 14h3.800" stroke="#16283a" stroke-width="1.300"/></svg></span><span class="fn g" style="left:80.30px;font-size:16px;letter-spacing:-0.009px">verify-cluster.ps1</span><span class="bdg g">U</span></div><div class="row" style="top:715px"><span class="fi" style="left:52.5px"><svg width="20" height="20" viewBox="0 0 20 20"><rect x="0.4" y="5.100" width="15.300" height="9.800" rx="1" fill="#6aa0c6"/><path d="M2.600 12.700V7.400l2.200 2.900L7 7.400v5.300" fill="none" stroke="#1b3448" stroke-width="1.500"/><path d="M11.500 7.200v4.600M9.300 10.200l2.200 2.600L13.700 10.200" fill="none" stroke="#1b3448" stroke-width="1.500"/></svg></span><span class="fn g" style="left:80.30px;font-size:16px;transform:scaleX(0.9117);transform-origin:0 50%">WINDOWS_SSH_SETUP.</span><span class="fn g" style="left:251.07px;font-size:16px;transform:scaleX(1.0000);transform-origin:0 50%">md</span><span class="bdg g">U</span></div><div class="row" style="top:742.5px"><span class="tw" style="left:19px"><svg width="20" height="20" viewBox="0 0 20 20"><path d="M6.400 2.800L12.600 9.200L6.400 15.600" fill="none" stroke="#c8c8c8" stroke-width="1.6"/></svg></span><span class="fi" style="left:43px"><svg width="20" height="20" viewBox="0 0 20 20"><path d="M-0.1 3.200a0.600 0.600 0 0 1 .6-.6h6a0.600 0.600 0 0 1 .6.6v1.550h6.500a0.600 0.600 0 0 1 .6.6v8.800a0.600 0.600 0 0 1-.6.6H0.500a0.600 0.600 0 0 1-.6-.6z" fill="#d2d2d2"/><path d="M1 3.900h4.800" stroke="#252628" stroke-width="0.9"/></svg></span><span class="fn n" style="left:70.00px;font-size:16px;transform:scaleX(0.9595);transform-origin:0 50%">pics</span></div></div><div class="pane-h" style="top:1253.75px"><span style="left:2.5px;top:3.75px;width:20px;height:20px"><svg width="20" height="20" viewBox="0 0 20 20"><path d="M6.400 2.800L12.600 9.200L6.400 15.600" fill="none" stroke="#c8c8c8" stroke-width="1.6"/></svg></span><span class="pane-t" style="left:25.30px;font-size:14.5px;transform:scaleX(0.9145);transform-origin:0 50%">OUTLINE</span></div><div class="pane-h" style="top:1281.25px"><span style="left:2.5px;top:3.75px;width:20px;height:20px"><svg width="20" height="20" viewBox="0 0 20 20"><path d="M6.400 2.800L12.600 9.200L6.400 15.600" fill="none" stroke="#c8c8c8" stroke-width="1.6"/></svg></span><span class="pane-t" style="left:25.30px;font-size:14.5px;transform:scaleX(0.9236);transform-origin:0 50%">TIMELINE</span></div></div>
<div id="tabs"><div class="tab active" style="left:0;width:149px"><span class="ti" style="left:12px"><svg width="20" height="20" viewBox="0 0 20 20"><svg x="0.4" y="2.2" width="14.3" height="15.800" viewBox="1.44 0 21.12 24" preserveAspectRatio="none"><path d="M1.44 0v7.575l6.561 3.79V3.787zM8.72 4.23v7.575l6.561 3.787V8.018zm0 8.405v7.575L15.28 24v-7.578z" fill="#875785"/><path d="M22.56 4.227l-6.561 3.791v7.574l6.56-3.787z" fill="#7a4e7a"/></svg></svg></span><span class="tl" style="left:40.30px;font-size:16px;letter-spacing:0.281px">main.tf</span><span class="tu" style="left:103.8px">U</span><span class="tdot"></span></div><div class="tab" style="left:150px;width:140px"><span class="ti" style="left:12px"><svg width="20" height="20" viewBox="0 0 20 20"><svg x="0.4" y="2.2" width="14.3" height="15.800" viewBox="1.44 0 21.12 24" preserveAspectRatio="none"><path d="M1.44 0v7.575l6.561 3.79V3.787zM8.72 4.23v7.575l6.561 3.787V8.018zm0 8.405v7.575L15.28 24v-7.578z" fill="#875785"/><path d="M22.56 4.227l-6.561 3.791v7.574l6.56-3.787z" fill="#7a4e7a"/></svg></svg></span><span class="tl" style="left:39.90px;font-size:16px;letter-spacing:0.430px">outputs.tf</span><span class="tu" style="left:115.600px">U</span></div><svg style="left:2900.8px;top:12.3px" width="20" height="20" viewBox="0 0 22 22" ><circle cx="4.600" cy="4.200" r="2.500" fill="none" stroke="#c8ccd4" stroke-width="1.700"/><circle cx="17.600" cy="17.800" r="2.500" fill="none" stroke="#c8ccd4" stroke-width="1.700"/><path d="M4.600 6.900v5.400a3.600 3.600 0 0 0 3.600 3.600h4.600M10.200 12.400l3.200 3.500-3.200 3.500" fill="none" stroke="#c8ccd4" stroke-width="1.700"/><path d="M17.600 15.100V9.700a3.600 3.600 0 0 0-3.600-3.600H10.200M13 2.600L9.800 6.100l3.200 3.500" fill="none" stroke="#c8ccd4" stroke-width="1.700"/></svg><svg style="left:2933.5px;top:12px" width="22" height="22" viewBox="0 0 22 22" ><rect x="2.200" y="1.900" width="16.400" height="16.500" rx="3" fill="none" stroke="#c8ccd4" stroke-width="1.700"/><path d="M10.400 1.900V18.400" fill="none" stroke="#c8ccd4" stroke-width="1.700"/></svg><svg style="left:2968px;top:14px" width="18" height="18" viewBox="0 0 18 18" ><circle cx="3.200" cy="7.900" r="1.450" fill="#c8ccd4"/><circle cx="8.400" cy="7.900" r="1.450" fill="#c8ccd4"/><circle cx="13.600" cy="7.900" r="1.450" fill="#c8ccd4"/></svg></div>
<div id="crumbs"><span class="cr" style="left:20.00px;font-size:16px;letter-spacing:0.139px">k3s-homelab</span><span class="crsep"><svg width="20" height="20" viewBox="0 0 20 20"><path d="M6.400 2.800L12.600 9.200L6.400 15.600" fill="none" stroke="#c4c4c4" stroke-width="1.5"/></svg></span><span class="cri"><svg width="20" height="20" viewBox="0 0 20 20"><svg x="0.4" y="2.2" width="14.3" height="15.800" viewBox="1.44 0 21.12 24" preserveAspectRatio="none"><path d="M1.44 0v7.575l6.561 3.79V3.787zM8.72 4.23v7.575l6.561 3.787V8.018zm0 8.405v7.575L15.28 24v-7.578z" fill="#875785"/><path d="M22.56 4.227l-6.561 3.791v7.574l6.56-3.787z" fill="#7a4e7a"/></svg></svg></span><span class="cr" style="left:161.00px;font-size:16px;letter-spacing:0.164px">main.tf</span></div>
<div id="editor"><div class="curline" style="top:593.75px"></div><div class="ig" style="left:85px;top:47.5px;height:166.25px"></div><div class="ig" style="left:104px;top:71.25px;height:95px"></div><div class="ig" style="left:123px;top:95px;height:47.5px"></div><div class="ig act" style="left:85px;top:308.75px;height:498.75px"></div><div class="ig" style="left:104px;top:332.5px;height:95px"></div><div class="ig" style="left:123px;top:356.25px;height:71.25px"></div><div class="ig" style="left:104px;top:593.75px;height:190px"></div><div class="ig" style="left:123px;top:593.75px;height:142.5px"></div><div class="ig" style="left:85px;top:902.5px;height:237.5px"></div><div class="ig" style="left:104px;top:926.25px;height:142.5px"></div><div class="ig" style="left:123px;top:950px;height:71.25px"></div><div class="ig" style="left:85px;top:1235px;height:3px"></div><div class="bm" style="left:344.675px;top:308.75px"></div><div class="bm" style="left:104.05px;top:783.75px"></div><div class="ln" style="top:0px">1</div><div class="ln" style="top:23.75px">2</div><div class="cl" style="top:23.75px"><span class="k2">terraform</span> <span class="b1">{</span></div><div class="ln" style="top:47.5px">3</div><div class="cl" style="top:47.5px">  <span class="k2">required_providers</span> <span class="b2">{</span></div><div class="ln" style="top:71.25px">4</div><div class="cl" style="top:71.25px">    <span class="v">null</span> = <span class="b3">{</span></div><div class="ln" style="top:95px">5</div><div class="cl" style="top:95px">      source  = <span class="s">"hashicorp/null"</span></div><div class="ln" style="top:118.75px">6</div><div class="cl" style="top:118.75px">      version = <span class="s">"~&gt; 3.2"</span></div><div class="ln" style="top:142.5px">7</div><div class="cl" style="top:142.5px">    <span class="b3">}</span></div><div class="ln" style="top:166.25px">8</div><div class="cl" style="top:166.25px">  <span class="b2">}</span></div><div class="ln" style="top:190px">9</div><div class="cl" style="top:190px">  required_version = <span class="s">"&gt;= 1.0"</span></div><div class="ln" style="top:213.75px">10</div><div class="cl" style="top:213.75px"><span class="b1">}</span></div><div class="ln" style="top:237.5px">11</div><div class="ln" style="top:261.25px">12</div><div class="cl" style="top:261.25px"><span class="c"># Install K3s on Master Node</span></div><div class="ln" style="top:285px">13</div><div class="cl" style="top:285px"><span class="k">resource</span> <span class="s">"null_resource"</span> <span class="s">"k3s_master"</span> <span class="b1">{</span></div><div class="ln" style="top:308.75px">14</div><div class="cl" style="top:308.75px">  provisioner <span class="s">"local-exec"</span> <span class="bx2">{</span></div><div class="ln" style="top:332.5px">15</div><div class="cl" style="top:332.5px">    command = <span class="s">&lt;&lt;-EOT</span></div><div class="ln" style="top:356.25px">16</div><div class="cl" style="top:356.25px"><span class="s">      Write-Host "Installing K3s on master node (</span><span class="d">$</span><span class="b3">{</span><span class="v">var.master_ip</span><span class="b3">}</span><span class="s">)..."</span></div><div class="ln" style="top:380px">17</div><div class="ln" style="top:403.75px">18</div><div class="cl" style="top:403.75px"><span class="s">      $installScript = @'</span></div><div class="ln" style="top:427.5px">19</div><div class="cl" style="top:427.5px"><span class="s">sudo curl -sfL </span><span class="u">https://get.k3s.io</span><span class="s"> | INSTALL_K3S_VERSION=</span><span class="d">$</span><span class="b3">{</span><span class="v">var.k3s_version</span><span class="b3">}</span><span class="s"> sh -s - server --disable traefik --disable servicelb --write-kubeconfig-mode 644</span></div><div class="ln" style="top:451.25px">20</div><div class="cl" style="top:451.25px"><span class="s">sudo systemctl enable k3s</span></div><div class="ln" style="top:475px">21</div><div class="cl" style="top:475px"><span class="s">sudo systemctl start k3s</span></div><div class="ln" style="top:498.75px">22</div><div class="cl" style="top:498.75px"><span class="s">sleep 10</span></div><div class="ln" style="top:522.5px">23</div><div class="cl" style="top:522.5px"><span class="s">echo "K3s master installation complete"</span></div><div class="ln" style="top:546.25px">24</div><div class="cl" style="top:546.25px"><span class="s">'@</span></div><div class="ln" style="top:570px">25</div><div class="ln cur" style="top:593.75px">26</div><div class="cl" style="top:593.75px"><span class="s">      # Execute on remote master node </span></div><div class="ln" style="top:617.5px">27</div><div class="cl" style="top:617.5px"><span class="s">      $password = "</span><span class="d">$</span><span class="b3">{</span><span class="v">var.ssh_password</span><span class="b3">}</span><span class="s">"</span></div><div class="ln" style="top:641.25px">28</div><div class="cl" style="top:641.25px"><span class="s">      $command = "echo '$installScript' | ssh -o StrictHostKeyChecking=no </span><span class="d">$</span><span class="b3">{</span><span class="v">var.ssh_user</span><span class="b3">}</span><span class="s">@</span><span class="d">$</span><span class="b3">{</span><span class="v">var.master_ip</span><span class="b3">}</span><span class="s"> 'bash -s'"</span></div><div class="ln" style="top:665px">29</div><div class="cl" style="top:665px"><span class="s">      Invoke-Expression $command</span></div><div class="ln" style="top:688.75px">30</div><div class="ln" style="top:712.5px">31</div><div class="cl" style="top:712.5px"><span class="s">      Write-Host "Master node setup complete!"</span></div><div class="ln" style="top:736.25px">32</div><div class="cl" style="top:736.25px"><span class="s">    EOT</span></div><div class="ln" style="top:760px">33</div><div class="cl" style="top:760px">    interpreter = <span class="b3">[</span><span class="s">"powershell"</span>, <span class="s">"-Command"</span><span class="b3">]</span></div><div class="ln" style="top:783.75px">34</div><div class="cl" style="top:783.75px">  <span class="bx2">}</span></div><div class="ln" style="top:807.5px">35</div><div class="cl" style="top:807.5px"><span class="b1">}</span></div><div class="ln" style="top:831.25px">36</div><div class="ln" style="top:855px">37</div><div class="cl" style="top:855px"><span class="c"># Get K3s token from master</span></div><div class="ln" style="top:878.75px">38</div><div class="cl" style="top:878.75px"><span class="k">resource</span> <span class="s">"null_resource"</span> <span class="s">"get_k3s_token"</span> <span class="b1">{</span></div><div class="ln" style="top:902.5px">39</div><div class="cl" style="top:902.5px">  provisioner <span class="s">"local-exec"</span> <span class="b2">{</span></div><div class="ln" style="top:926.25px">40</div><div class="cl" style="top:926.25px">    command = <span class="s">&lt;&lt;-EOT</span></div><div class="ln" style="top:950px">41</div><div class="cl" style="top:950px"><span class="s">      Write-Host "Retrieving K3s token from master..."</span></div><div class="ln" style="top:973.75px">42</div><div class="cl" style="top:973.75px"><span class="s">      ssh -o StrictHostKeyChecking=no </span><span class="d">$</span><span class="b3">{</span><span class="v">var.ssh_user</span><span class="b3">}</span><span class="s">@</span><span class="d">$</span><span class="b3">{</span><span class="v">var.master_ip</span><span class="b3">}</span><span class="s"> "sudo cat /var/lib/rancher/k3s/server/node-token" | Out-File -FilePath "k3s-token.txt" -Encoding UTF8 -NoNewline</span></div><div class="ln" style="top:997.5px">43</div><div class="cl" style="top:997.5px"><span class="s">      Write-Host "Token saved to k3s-token.txt"</span></div><div class="ln" style="top:1021.25px">44</div><div class="cl" style="top:1021.25px"><span class="s">    EOT</span></div><div class="ln" style="top:1045px">45</div><div class="cl" style="top:1045px">    interpreter = <span class="b3">[</span><span class="s">"powershell"</span>, <span class="s">"-Command"</span><span class="b3">]</span></div><div class="ln" style="top:1068.75px">46</div><div class="cl" style="top:1068.75px">  <span class="b2">}</span></div><div class="ln" style="top:1092.5px">47</div><div class="ln" style="top:1116.25px">48</div><div class="cl" style="top:1116.25px">  <span class="v">depends_on</span> = <span class="b2">[</span>null_resource.k3s_master<span class="b2">]</span></div><div class="ln" style="top:1140px">49</div><div class="cl" style="top:1140px"><span class="b1">}</span></div><div class="ln" style="top:1163.75px">50</div><div class="ln" style="top:1187.5px">51</div><div class="cl" style="top:1187.5px"><span class="c"># Get kubeconfig from master</span></div><div class="ln" style="top:1211.25px">52</div><div class="cl" style="top:1211.25px"><span class="k">resource</span> <span class="s">"null_resource"</span> <span class="s">"get_kubeconfig"</span> <span class="b1">{</span></div><div class="cursor" style="left:451.15px;top:593.75px"></div><svg id="minimap" width="120" height="360" viewBox="0 0 120 360"><rect x="8" y="2.1" width="9" height="1.250" fill="#ff75b5" opacity="0.5"/><rect x="18" y="2.1" width="1" height="1.250" fill="#ffd700" opacity="0.5"/><rect x="10" y="4.1" width="18" height="1.250" fill="#ff75b5" opacity="0.5"/><rect x="29" y="4.1" width="1" height="1.250" fill="#da70d6" opacity="0.5"/><rect x="12" y="6.1" width="4" height="1.250" fill="#ffcc99" opacity="0.5"/><rect x="17" y="6.1" width="1" height="1.250" fill="#dcdcdc" opacity="0.5"/><rect x="19" y="6.1" width="1" height="1.250" fill="#179fff" opacity="0.5"/><rect x="14" y="8.1" width="6" height="1.250" fill="#dcdcdc" opacity="0.5"/><rect x="22" y="8.1" width="1" height="1.250" fill="#dcdcdc" opacity="0.5"/><rect x="24" y="8.1" width="16" height="1.250" fill="#19f9d8" opacity="0.5"/><rect x="14" y="10.1" width="7" height="1.250" fill="#dcdcdc" opacity="0.5"/><rect x="22" y="10.1" width="1" height="1.250" fill="#dcdcdc" opacity="0.5"/><rect x="24" y="10.1" width="3" height="1.250" fill="#19f9d8" opacity="0.5"/><rect x="28" y="10.1" width="4" height="1.250" fill="#19f9d8" opacity="0.5"/><rect x="12" y="12.1" width="1" height="1.250" fill="#179fff" opacity="0.5"/><rect x="10" y="14.1" width="1" height="1.250" fill="#da70d6" opacity="0.5"/><rect x="10" y="16.1" width="16" height="1.250" fill="#dcdcdc" opacity="0.5"/><rect x="27" y="16.1" width="1" height="1.250" fill="#dcdcdc" opacity="0.5"/><rect x="29" y="16.1" width="3" height="1.250" fill="#19f9d8" opacity="0.5"/><rect x="33" y="16.1" width="4" height="1.250" fill="#19f9d8" opacity="0.5"/><rect x="8" y="18.1" width="1" height="1.250" fill="#ffd700" opacity="0.5"/><rect x="8" y="22.1" width="1" height="1.250" fill="#6f7379" opacity="0.600"/><rect x="10" y="22.1" width="7" height="1.250" fill="#6f7379" opacity="0.600"/><rect x="18" y="22.1" width="3" height="1.250" fill="#6f7379" opacity="0.600"/><rect x="22" y="22.1" width="2" height="1.250" fill="#6f7379" opacity="0.600"/><rect x="25" y="22.1" width="6" height="1.250" fill="#6f7379" opacity="0.600"/><rect x="32" y="22.1" width="4" height="1.250" fill="#6f7379" opacity="0.600"/><rect x="8" y="24.1" width="8" height="1.250" fill="#ff4b82" opacity="0.5"/><rect x="17" y="24.1" width="15" height="1.250" fill="#19f9d8" opacity="0.5"/><rect x="33" y="24.1" width="12" height="1.250" fill="#19f9d8" opacity="0.5"/><rect x="46" y="24.1" width="1" height="1.250" fill="#ffd700" opacity="0.5"/><rect x="10" y="26.1" width="11" height="1.250" fill="#dcdcdc" opacity="0.5"/><rect x="22" y="26.1" width="12" height="1.250" fill="#19f9d8" opacity="0.5"/><rect x="35" y="26.1" width="1" height="1.250" fill="#da70d6" opacity="0.5"/><rect x="12" y="28.1" width="7" height="1.250" fill="#dcdcdc" opacity="0.5"/><rect x="20" y="28.1" width="1" height="1.250" fill="#dcdcdc" opacity="0.5"/><rect x="22" y="28.1" width="6" height="1.250" fill="#19f9d8" opacity="0.5"/><rect x="14" y="30.1" width="10" height="1.250" fill="#19f9d8" opacity="0.5"/><rect x="25" y="30.1" width="11" height="1.250" fill="#19f9d8" opacity="0.5"/><rect x="37" y="30.1" width="3" height="1.250" fill="#19f9d8" opacity="0.5"/><rect x="41" y="30.1" width="2" height="1.250" fill="#19f9d8" opacity="0.5"/><rect x="44" y="30.1" width="6" height="1.250" fill="#19f9d8" opacity="0.5"/><rect x="51" y="30.1" width="4" height="1.250" fill="#19f9d8" opacity="0.5"/><rect x="56" y="30.1" width="1" height="1.250" fill="#19f9d8" opacity="0.5"/><rect x="57" y="30.1" width="1" height="1.250" fill="#ffb86c" opacity="0.5"/><rect x="58" y="30.1" width="1" height="1.250" fill="#179fff" opacity="0.5"/><rect x="59" y="30.1" width="13" height="1.250" fill="#ffcc99" opacity="0.5"/><rect x="72" y="30.1" width="1" height="1.250" fill="#179fff" opacity="0.5"/><rect x="73" y="30.1" width="5" height="1.250" fill="#19f9d8" opacity="0.5"/><rect x="14" y="34.1" width="14" height="1.250" fill="#19f9d8" opacity="0.5"/><rect x="29" y="34.1" width="1" height="1.250" fill="#19f9d8" opacity="0.5"/><rect x="31" y="34.1" width="2" height="1.250" fill="#19f9d8" opacity="0.5"/><rect x="8" y="36.1" width="4" height="1.250" fill="#19f9d8" opacity="0.5"/><rect x="13" y="36.1" width="4" height="1.250" fill="#19f9d8" opacity="0.5"/><rect x="18" y="36.1" width="4" height="1.250" fill="#19f9d8" opacity="0.5"/><rect x="23" y="36.1" width="18" height="1.250" fill="#19f9d8" opacity="0.5"/><rect x="42" y="36.1" width="1" height="1.250" fill="#19f9d8" opacity="0.5"/><rect x="44" y="36.1" width="20" height="1.250" fill="#19f9d8" opacity="0.5"/><rect x="64" y="36.1" width="1" height="1.250" fill="#ffb86c" opacity="0.5"/><rect x="65" y="36.1" width="1" height="1.250" fill="#179fff" opacity="0.5"/><rect x="66" y="36.1" width="15" height="1.250" fill="#ffcc99" opacity="0.5"/><rect x="81" y="36.1" width="1" height="1.250" fill="#179fff" opacity="0.5"/><rect x="83" y="36.1" width="2" height="1.250" fill="#19f9d8" opacity="0.5"/><rect x="86" y="36.1" width="2" height="1.250" fill="#19f9d8" opacity="0.5"/><rect x="89" y="36.1" width="1" height="1.250" fill="#19f9d8" opacity="0.5"/><rect x="91" y="36.1" width="6" height="1.250" fill="#19f9d8" opacity="0.5"/><rect x="98" y="36.1" width="9" height="1.250" fill="#19f9d8" opacity="0.5"/><rect x="108" y="36.1" width="7" height="1.250" fill="#19f9d8" opacity="0.5"/><rect x="116" y="36.1" width="4" height="1.250" fill="#19f9d8" opacity="0.5"/><rect x="8" y="38.1" width="4" height="1.250" fill="#19f9d8" opacity="0.5"/><rect x="13" y="38.1" width="9" height="1.250" fill="#19f9d8" opacity="0.5"/><rect x="23" y="38.1" width="6" height="1.250" fill="#19f9d8" opacity="0.5"/><rect x="30" y="38.1" width="3" height="1.250" fill="#19f9d8" opacity="0.5"/><rect x="8" y="40.1" width="4" height="1.250" fill="#19f9d8" opacity="0.5"/><rect x="13" y="40.1" width="9" height="1.250" fill="#19f9d8" opacity="0.5"/><rect x="23" y="40.1" width="5" height="1.250" fill="#19f9d8" opacity="0.5"/><rect x="29" y="40.1" width="3" height="1.250" fill="#19f9d8" opacity="0.5"/><rect x="8" y="42.1" width="5" height="1.250" fill="#19f9d8" opacity="0.5"/><rect x="14" y="42.1" width="2" height="1.250" fill="#19f9d8" opacity="0.5"/><rect x="8" y="44.1" width="4" height="1.250" fill="#19f9d8" opacity="0.5"/><rect x="13" y="44.1" width="4" height="1.250" fill="#19f9d8" opacity="0.5"/><rect x="18" y="44.1" width="6" height="1.250" fill="#19f9d8" opacity="0.5"/><rect x="25" y="44.1" width="12" height="1.250" fill="#19f9d8" opacity="0.5"/><rect x="38" y="44.1" width="9" height="1.250" fill="#19f9d8" opacity="0.5"/><rect x="8" y="46.1" width="2" height="1.250" fill="#19f9d8" opacity="0.5"/><rect x="14" y="50.1" width="1" height="1.250" fill="#19f9d8" opacity="0.5"/><rect x="16" y="50.1" width="7" height="1.250" fill="#19f9d8" opacity="0.5"/><rect x="24" y="50.1" width="2" height="1.250" fill="#19f9d8" opacity="0.5"/><rect x="27" y="50.1" width="6" height="1.250" fill="#19f9d8" opacity="0.5"/><rect x="34" y="50.1" width="6" height="1.250" fill="#19f9d8" opacity="0.5"/><rect x="41" y="50.1" width="4" height="1.250" fill="#19f9d8" opacity="0.5"/><rect x="14" y="52.1" width="9" height="1.250" fill="#19f9d8" opacity="0.5"/><rect x="24" y="52.1" width="1" height="1.250" fill="#19f9d8" opacity="0.5"/><rect x="26" y="52.1" width="1" height="1.250" fill="#19f9d8" opacity="0.5"/><rect x="27" y="52.1" width="1" height="1.250" fill="#ffb86c" opacity="0.5"/><rect x="28" y="52.1" width="1" height="1.250" fill="#179fff" opacity="0.5"/><rect x="29" y="52.1" width="16" height="1.250" fill="#ffcc99" opacity="0.5"/><rect x="45" y="52.1" width="1" height="1.250" fill="#179fff" opacity="0.5"/><rect x="46" y="52.1" width="1" height="1.250" fill="#19f9d8" opacity="0.5"/><rect x="14" y="54.1" width="8" height="1.250" fill="#19f9d8" opacity="0.5"/><rect x="23" y="54.1" width="1" height="1.250" fill="#19f9d8" opacity="0.5"/><rect x="25" y="54.1" width="5" height="1.250" fill="#19f9d8" opacity="0.5"/><rect x="31" y="54.1" width="16" height="1.250" fill="#19f9d8" opacity="0.5"/><rect x="48" y="54.1" width="1" height="1.250" fill="#19f9d8" opacity="0.5"/><rect x="50" y="54.1" width="3" height="1.250" fill="#19f9d8" opacity="0.5"/><rect x="54" y="54.1" width="2" height="1.250" fill="#19f9d8" opacity="0.5"/><rect x="57" y="54.1" width="24" height="1.250" fill="#19f9d8" opacity="0.5"/><rect x="82" y="54.1" width="1" height="1.250" fill="#ffb86c" opacity="0.5"/><rect x="83" y="54.1" width="1" height="1.250" fill="#179fff" opacity="0.5"/><rect x="84" y="54.1" width="12" height="1.250" fill="#ffcc99" opacity="0.5"/><rect x="96" y="54.1" width="1" height="1.250" fill="#179fff" opacity="0.5"/><rect x="97" y="54.1" width="1" height="1.250" fill="#19f9d8" opacity="0.5"/><rect x="98" y="54.1" width="1" height="1.250" fill="#ffb86c" opacity="0.5"/><rect x="99" y="54.1" width="1" height="1.250" fill="#179fff" opacity="0.5"/><rect x="100" y="54.1" width="13" height="1.250" fill="#ffcc99" opacity="0.5"/><rect x="113" y="54.1" width="1" height="1.250" fill="#179fff" opacity="0.5"/><rect x="115" y="54.1" width="5" height="1.250" fill="#19f9d8" opacity="0.5"/><rect x="14" y="56.1" width="17" height="1.250" fill="#19f9d8" opacity="0.5"/><rect x="32" y="56.1" width="8" height="1.250" fill="#19f9d8" opacity="0.5"/><rect x="14" y="60.1" width="10" height="1.250" fill="#19f9d8" opacity="0.5"/><rect x="25" y="60.1" width="7" height="1.250" fill="#19f9d8" opacity="0.5"/><rect x="33" y="60.1" width="4" height="1.250" fill="#19f9d8" opacity="0.5"/><rect x="38" y="60.1" width="5" height="1.250" fill="#19f9d8" opacity="0.5"/><rect x="44" y="60.1" width="10" height="1.250" fill="#19f9d8" opacity="0.5"/><rect x="12" y="62.1" width="3" height="1.250" fill="#19f9d8" opacity="0.5"/><rect x="12" y="64.1" width="11" height="1.250" fill="#dcdcdc" opacity="0.5"/><rect x="24" y="64.1" width="1" height="1.250" fill="#dcdcdc" opacity="0.5"/><rect x="26" y="64.1" width="1" height="1.250" fill="#179fff" opacity="0.5"/><rect x="27" y="64.1" width="12" height="1.250" fill="#19f9d8" opacity="0.5"/><rect x="39" y="64.1" width="1" height="1.250" fill="#dcdcdc" opacity="0.5"/><rect x="41" y="64.1" width="10" height="1.250" fill="#19f9d8" opacity="0.5"/><rect x="51" y="64.1" width="1" height="1.250" fill="#179fff" opacity="0.5"/><rect x="10" y="66.1" width="1" height="1.250" fill="#da70d6" opacity="0.5"/><rect x="8" y="68.1" width="1" height="1.250" fill="#ffd700" opacity="0.5"/><rect x="8" y="72.1" width="1" height="1.250" fill="#6f7379" opacity="0.600"/><rect x="10" y="72.1" width="3" height="1.250" fill="#6f7379" opacity="0.600"/><rect x="14" y="72.1" width="3" height="1.250" fill="#6f7379" opacity="0.600"/><rect x="18" y="72.1" width="5" height="1.250" fill="#6f7379" opacity="0.600"/><rect x="24" y="72.1" width="4" height="1.250" fill="#6f7379" opacity="0.600"/><rect x="29" y="72.1" width="6" height="1.250" fill="#6f7379" opacity="0.600"/><rect x="8" y="74.1" width="8" height="1.250" fill="#ff4b82" opacity="0.5"/><rect x="17" y="74.1" width="15" height="1.250" fill="#19f9d8" opacity="0.5"/><rect x="33" y="74.1" width="15" height="1.250" fill="#19f9d8" opacity="0.5"/><rect x="49" y="74.1" width="1" height="1.250" fill="#ffd700" opacity="0.5"/><rect x="10" y="76.1" width="11" height="1.250" fill="#dcdcdc" opacity="0.5"/><rect x="22" y="76.1" width="12" height="1.250" fill="#19f9d8" opacity="0.5"/><rect x="35" y="76.1" width="1" height="1.250" fill="#da70d6" opacity="0.5"/><rect x="12" y="78.1" width="7" height="1.250" fill="#dcdcdc" opacity="0.5"/><rect x="20" y="78.1" width="1" height="1.250" fill="#dcdcdc" opacity="0.5"/><rect x="22" y="78.1" width="6" height="1.250" fill="#19f9d8" opacity="0.5"/><rect x="14" y="80.1" width="10" height="1.250" fill="#19f9d8" opacity="0.5"/><rect x="25" y="80.1" width="11" height="1.250" fill="#19f9d8" opacity="0.5"/><rect x="37" y="80.1" width="3" height="1.250" fill="#19f9d8" opacity="0.5"/><rect x="41" y="80.1" width="5" height="1.250" fill="#19f9d8" opacity="0.5"/><rect x="47" y="80.1" width="4" height="1.250" fill="#19f9d8" opacity="0.5"/><rect x="52" y="80.1" width="10" height="1.250" fill="#19f9d8" opacity="0.5"/><rect x="14" y="82.1" width="3" height="1.250" fill="#19f9d8" opacity="0.5"/><rect x="18" y="82.1" width="2" height="1.250" fill="#19f9d8" opacity="0.5"/><rect x="21" y="82.1" width="24" height="1.250" fill="#19f9d8" opacity="0.5"/><rect x="46" y="82.1" width="1" height="1.250" fill="#ffb86c" opacity="0.5"/><rect x="47" y="82.1" width="1" height="1.250" fill="#179fff" opacity="0.5"/><rect x="48" y="82.1" width="12" height="1.250" fill="#ffcc99" opacity="0.5"/><rect x="60" y="82.1" width="1" height="1.250" fill="#179fff" opacity="0.5"/><rect x="61" y="82.1" width="1" height="1.250" fill="#19f9d8" opacity="0.5"/><rect x="62" y="82.1" width="1" height="1.250" fill="#ffb86c" opacity="0.5"/><rect x="63" y="82.1" width="1" height="1.250" fill="#179fff" opacity="0.5"/><rect x="64" y="82.1" width="13" height="1.250" fill="#ffcc99" opacity="0.5"/><rect x="77" y="82.1" width="1" height="1.250" fill="#179fff" opacity="0.5"/><rect x="79" y="82.1" width="5" height="1.250" fill="#19f9d8" opacity="0.5"/><rect x="85" y="82.1" width="3" height="1.250" fill="#19f9d8" opacity="0.5"/><rect x="89" y="82.1" width="31" height="1.250" fill="#19f9d8" opacity="0.5"/><rect x="14" y="84.1" width="10" height="1.250" fill="#19f9d8" opacity="0.5"/><rect x="25" y="84.1" width="6" height="1.250" fill="#19f9d8" opacity="0.5"/><rect x="32" y="84.1" width="5" height="1.250" fill="#19f9d8" opacity="0.5"/><rect x="38" y="84.1" width="2" height="1.250" fill="#19f9d8" opacity="0.5"/><rect x="41" y="84.1" width="14" height="1.250" fill="#19f9d8" opacity="0.5"/><rect x="12" y="86.1" width="3" height="1.250" fill="#19f9d8" opacity="0.5"/><rect x="12" y="88.1" width="11" height="1.250" fill="#dcdcdc" opacity="0.5"/><rect x="24" y="88.1" width="1" height="1.250" fill="#dcdcdc" opacity="0.5"/><rect x="26" y="88.1" width="1" height="1.250" fill="#179fff" opacity="0.5"/><rect x="27" y="88.1" width="12" height="1.250" fill="#19f9d8" opacity="0.5"/><rect x="39" y="88.1" width="1" height="1.250" fill="#dcdcdc" opacity="0.5"/><rect x="41" y="88.1" width="10" height="1.250" fill="#19f9d8" opacity="0.5"/><rect x="51" y="88.1" width="1" height="1.250" fill="#179fff" opacity="0.5"/><rect x="10" y="90.1" width="1" height="1.250" fill="#da70d6" opacity="0.5"/><rect x="10" y="94.1" width="10" height="1.250" fill="#ffcc99" opacity="0.5"/><rect x="21" y="94.1" width="1" height="1.250" fill="#dcdcdc" opacity="0.5"/><rect x="23" y="94.1" width="1" height="1.250" fill="#da70d6" opacity="0.5"/><rect x="24" y="94.1" width="24" height="1.250" fill="#dcdcdc" opacity="0.5"/><rect x="48" y="94.1" width="1" height="1.250" fill="#da70d6" opacity="0.5"/><rect x="8" y="96.1" width="1" height="1.250" fill="#ffd700" opacity="0.5"/><rect x="8" y="100.1" width="1" height="1.250" fill="#6f7379" opacity="0.600"/><rect x="10" y="100.1" width="3" height="1.250" fill="#6f7379" opacity="0.600"/><rect x="14" y="100.1" width="10" height="1.250" fill="#6f7379" opacity="0.600"/><rect x="25" y="100.1" width="4" height="1.250" fill="#6f7379" opacity="0.600"/><rect x="30" y="100.1" width="6" height="1.250" fill="#6f7379" opacity="0.600"/><rect x="8" y="102.1" width="8" height="1.250" fill="#ff4b82" opacity="0.5"/><rect x="17" y="102.1" width="15" height="1.250" fill="#19f9d8" opacity="0.5"/><rect x="33" y="102.1" width="16" height="1.250" fill="#19f9d8" opacity="0.5"/><rect x="50" y="102.1" width="1" height="1.250" fill="#ffd700" opacity="0.5"/><rect x="10" y="104.1" width="11" height="1.250" fill="#dcdcdc" opacity="0.5"/><rect x="22" y="104.1" width="12" height="1.250" fill="#19f9d8" opacity="0.5"/><rect x="35" y="104.1" width="1" height="1.250" fill="#da70d6" opacity="0.5"/><rect x="12" y="106.1" width="7" height="1.250" fill="#dcdcdc" opacity="0.5"/><rect x="20" y="106.1" width="1" height="1.250" fill="#dcdcdc" opacity="0.5"/><rect x="22" y="106.1" width="6" height="1.250" fill="#19f9d8" opacity="0.5"/><rect x="14" y="108.1" width="10" height="1.250" fill="#19f9d8" opacity="0.5"/><rect x="25" y="108.1" width="11" height="1.250" fill="#19f9d8" opacity="0.5"/><rect x="37" y="108.1" width="10" height="1.250" fill="#19f9d8" opacity="0.5"/><rect x="48" y="108.1" width="4" height="1.250" fill="#19f9d8" opacity="0.5"/><rect x="53" y="108.1" width="10" height="1.250" fill="#19f9d8" opacity="0.5"/><rect x="14" y="110.1" width="3" height="1.250" fill="#19f9d8" opacity="0.5"/><rect x="18" y="110.1" width="2" height="1.250" fill="#19f9d8" opacity="0.5"/><rect x="21" y="110.1" width="24" height="1.250" fill="#19f9d8" opacity="0.5"/><rect x="46" y="110.1" width="1" height="1.250" fill="#ffb86c" opacity="0.5"/><rect x="47" y="110.1" width="1" height="1.250" fill="#179fff" opacity="0.5"/><rect x="48" y="110.1" width="12" height="1.250" fill="#ffcc99" opacity="0.5"/><rect x="60" y="110.1" width="1" height="1.250" fill="#179fff" opacity="0.5"/><rect x="61" y="110.1" width="1" height="1.250" fill="#19f9d8" opacity="0.5"/><rect x="62" y="110.1" width="1" height="1.250" fill="#ffb86c" opacity="0.5"/><rect x="63" y="110.1" width="1" height="1.250" fill="#179fff" opacity="0.5"/><rect x="64" y="110.1" width="13" height="1.250" fill="#ffcc99" opacity="0.5"/><rect x="77" y="110.1" width="1" height="1.250" fill="#179fff" opacity="0.5"/><rect x="79" y="110.1" width="5" height="1.250" fill="#19f9d8" opacity="0.5"/><rect x="85" y="110.1" width="3" height="1.250" fill="#19f9d8" opacity="0.5"/><rect x="89" y="110.1" width="26" height="1.250" fill="#19f9d8" opacity="0.5"/><rect x="116" y="110.1" width="1" height="1.250" fill="#19f9d8" opacity="0.5"/><rect x="118" y="110.1" width="2" height="1.250" fill="#19f9d8" opacity="0.5"/><rect x="14" y="114.1" width="1" height="1.250" fill="#19f9d8" opacity="0.5"/><rect x="16" y="114.1" width="7" height="1.250" fill="#19f9d8" opacity="0.5"/><rect x="24" y="114.1" width="9" height="1.250" fill="#19f9d8" opacity="0.5"/><rect x="34" y="114.1" width="4" height="1.250" fill="#19f9d8" opacity="0.5"/><rect x="39" y="114.1" width="6" height="1.250" fill="#19f9d8" opacity="0.5"/><rect x="46" y="114.1" width="2" height="1.250" fill="#19f9d8" opacity="0.5"/><rect x="14" y="116.1" width="12" height="1.250" fill="#19f9d8" opacity="0.5"/><rect x="27" y="116.1" width="15" height="1.250" fill="#19f9d8" opacity="0.5"/><rect x="43" y="116.1" width="5" height="1.250" fill="#19f9d8" opacity="0.5"/><rect x="49" y="116.1" width="8" height="1.250" fill="#19f9d8" opacity="0.5"/><rect x="58" y="116.1" width="12" height="1.250" fill="#19f9d8" opacity="0.5"/><rect x="71" y="116.1" width="1" height="1.250" fill="#19f9d8" opacity="0.5"/><rect x="72" y="116.1" width="1" height="1.250" fill="#ffb86c" opacity="0.5"/><rect x="73" y="116.1" width="1" height="1.250" fill="#179fff" opacity="0.5"/><rect x="74" y="116.1" width="13" height="1.250" fill="#ffcc99" opacity="0.5"/><rect x="87" y="116.1" width="1" height="1.250" fill="#179fff" opacity="0.5"/><rect x="88" y="116.1" width="1" height="1.250" fill="#19f9d8" opacity="0.5"/><rect x="90" y="116.1" width="1" height="1.250" fill="#19f9d8" opacity="0.5"/><rect x="92" y="116.1" width="11" height="1.250" fill="#19f9d8" opacity="0.5"/><rect x="104" y="116.1" width="15" height="1.250" fill="#19f9d8" opacity="0.5"/><rect x="14" y="118.1" width="10" height="1.250" fill="#19f9d8" opacity="0.5"/><rect x="25" y="118.1" width="11" height="1.250" fill="#19f9d8" opacity="0.5"/><rect x="37" y="118.1" width="5" height="1.250" fill="#19f9d8" opacity="0.5"/><rect x="43" y="118.1" width="2" height="1.250" fill="#19f9d8" opacity="0.5"/><rect x="46" y="118.1" width="16" height="1.250" fill="#19f9d8" opacity="0.5"/><rect x="12" y="120.1" width="3" height="1.250" fill="#19f9d8" opacity="0.5"/><rect x="12" y="122.1" width="11" height="1.250" fill="#dcdcdc" opacity="0.5"/><rect x="24" y="122.1" width="1" height="1.250" fill="#dcdcdc" opacity="0.5"/><rect x="26" y="122.1" width="1" height="1.250" fill="#179fff" opacity="0.5"/><rect x="27" y="122.1" width="12" height="1.250" fill="#19f9d8" opacity="0.5"/><rect x="39" y="122.1" width="1" height="1.250" fill="#dcdcdc" opacity="0.5"/><rect x="41" y="122.1" width="10" height="1.250" fill="#19f9d8" opacity="0.5"/><rect x="51" y="122.1" width="1" height="1.250" fill="#179fff" opacity="0.5"/><rect x="10" y="124.1" width="1" height="1.250" fill="#da70d6" opacity="0.5"/><rect x="10" y="128.1" width="10" height="1.250" fill="#ffcc99" opacity="0.5"/><rect x="21" y="128.1" width="1" height="1.250" fill="#dcdcdc" opacity="0.5"/><rect x="23" y="128.1" width="1" height="1.250" fill="#da70d6" opacity="0.5"/><rect x="24" y="128.1" width="24" height="1.250" fill="#dcdcdc" opacity="0.5"/><rect x="48" y="128.1" width="1" height="1.250" fill="#da70d6" opacity="0.5"/><rect x="8" y="130.1" width="1" height="1.250" fill="#ffd700" opacity="0.5"/><rect x="8" y="134.1" width="1" height="1.250" fill="#6f7379" opacity="0.600"/><rect x="10" y="134.1" width="7" height="1.250" fill="#6f7379" opacity="0.600"/><rect x="18" y="134.1" width="3" height="1.250" fill="#6f7379" opacity="0.600"/><rect x="22" y="134.1" width="2" height="1.250" fill="#6f7379" opacity="0.600"/><rect x="25" y="134.1" width="6" height="1.250" fill="#6f7379" opacity="0.600"/><rect x="32" y="134.1" width="4" height="1.250" fill="#6f7379" opacity="0.600"/><rect x="37" y="134.1" width="1" height="1.250" fill="#6f7379" opacity="0.600"/><rect x="8" y="136.1" width="8" height="1.250" fill="#ff4b82" opacity="0.5"/><rect x="17" y="136.1" width="15" height="1.250" fill="#19f9d8" opacity="0.5"/><rect x="33" y="136.1" width="14" height="1.250" fill="#19f9d8" opacity="0.5"/><rect x="48" y="136.1" width="1" height="1.250" fill="#ffd700" opacity="0.5"/><rect x="10" y="138.1" width="11" height="1.250" fill="#dcdcdc" opacity="0.5"/><rect x="22" y="138.1" width="12" height="1.250" fill="#19f9d8" opacity="0.5"/><rect x="35" y="138.1" width="1" height="1.250" fill="#da70d6" opacity="0.5"/><rect x="12" y="140.1" width="7" height="1.250" fill="#dcdcdc" opacity="0.5"/><rect x="20" y="140.1" width="1" height="1.250" fill="#dcdcdc" opacity="0.5"/><rect x="22" y="140.1" width="6" height="1.250" fill="#19f9d8" opacity="0.5"/><rect x="14" y="142.1" width="10" height="1.250" fill="#19f9d8" opacity="0.5"/><rect x="25" y="142.1" width="11" height="1.250" fill="#19f9d8" opacity="0.5"/><rect x="37" y="142.1" width="3" height="1.250" fill="#19f9d8" opacity="0.5"/><rect x="41" y="142.1" width="2" height="1.250" fill="#19f9d8" opacity="0.5"/><rect x="44" y="142.1" width="6" height="1.250" fill="#19f9d8" opacity="0.5"/><rect x="51" y="142.1" width="4" height="1.250" fill="#19f9d8" opacity="0.5"/><rect x="56" y="142.1" width="1" height="1.250" fill="#19f9d8" opacity="0.5"/><rect x="58" y="142.1" width="1" height="1.250" fill="#19f9d8" opacity="0.5"/><rect x="59" y="142.1" width="1" height="1.250" fill="#ffb86c" opacity="0.5"/><rect x="60" y="142.1" width="1" height="1.250" fill="#179fff" opacity="0.5"/><rect x="61" y="142.1" width="17" height="1.250" fill="#ffcc99" opacity="0.5"/><rect x="78" y="142.1" width="1" height="1.250" fill="#179fff" opacity="0.5"/><rect x="79" y="142.1" width="5" height="1.250" fill="#19f9d8" opacity="0.5"/><rect x="14" y="144.1" width="11" height="1.250" fill="#19f9d8" opacity="0.5"/><rect x="26" y="144.1" width="8" height="1.250" fill="#19f9d8" opacity="0.5"/><rect x="35" y="144.1" width="1" height="1.250" fill="#19f9d8" opacity="0.5"/><rect x="14" y="148.1" width="1" height="1.250" fill="#19f9d8" opacity="0.5"/><rect x="16" y="148.1" width="3" height="1.250" fill="#19f9d8" opacity="0.5"/><rect x="20" y="148.1" width="3" height="1.250" fill="#19f9d8" opacity="0.5"/><rect x="24" y="148.1" width="5" height="1.250" fill="#19f9d8" opacity="0.5"/><rect x="14" y="150.1" width="6" height="1.250" fill="#19f9d8" opacity="0.5"/><rect x="21" y="150.1" width="1" height="1.250" fill="#19f9d8" opacity="0.5"/><rect x="23" y="150.1" width="11" height="1.250" fill="#19f9d8" opacity="0.5"/><rect x="35" y="150.1" width="13" height="1.250" fill="#19f9d8" opacity="0.5"/><rect x="49" y="150.1" width="4" height="1.250" fill="#19f9d8" opacity="0.5"/><rect x="14" y="152.1" width="6" height="1.250" fill="#19f9d8" opacity="0.5"/><rect x="21" y="152.1" width="1" height="1.250" fill="#19f9d8" opacity="0.5"/><rect x="23" y="152.1" width="13" height="1.250" fill="#19f9d8" opacity="0.5"/><rect x="14" y="156.1" width="14" height="1.250" fill="#19f9d8" opacity="0.5"/><rect x="29" y="156.1" width="1" height="1.250" fill="#19f9d8" opacity="0.5"/><rect x="31" y="156.1" width="2" height="1.250" fill="#19f9d8" opacity="0.5"/><rect x="8" y="158.1" width="6" height="1.250" fill="#19f9d8" opacity="0.5"/><rect x="15" y="158.1" width="16" height="1.250" fill="#19f9d8" opacity="0.5"/><rect x="8" y="160.1" width="4" height="1.250" fill="#19f9d8" opacity="0.5"/><rect x="13" y="160.1" width="4" height="1.250" fill="#19f9d8" opacity="0.5"/><rect x="18" y="160.1" width="4" height="1.250" fill="#19f9d8" opacity="0.5"/><rect x="23" y="160.1" width="18" height="1.250" fill="#19f9d8" opacity="0.5"/><rect x="42" y="160.1" width="1" height="1.250" fill="#19f9d8" opacity="0.5"/><rect x="44" y="160.1" width="20" height="1.250" fill="#19f9d8" opacity="0.5"/><rect x="64" y="160.1" width="1" height="1.250" fill="#ffb86c" opacity="0.5"/><rect x="65" y="160.1" width="1" height="1.250" fill="#179fff" opacity="0.5"/><rect x="66" y="160.1" width="15" height="1.250" fill="#ffcc99" opacity="0.5"/><rect x="81" y="160.1" width="1" height="1.250" fill="#179fff" opacity="0.5"/><rect x="83" y="160.1" width="16" height="1.250" fill="#19f9d8" opacity="0.5"/><rect x="99" y="160.1" width="1" height="1.250" fill="#ffb86c" opacity="0.5"/><rect x="100" y="160.1" width="1" height="1.250" fill="#179fff" opacity="0.5"/><rect x="101" y="160.1" width="13" height="1.250" fill="#ffcc99" opacity="0.5"/><rect x="114" y="160.1" width="1" height="1.250" fill="#179fff" opacity="0.5"/><rect x="115" y="160.1" width="5" height="1.250" fill="#19f9d8" opacity="0.5"/><rect x="8" y="162.1" width="4" height="1.250" fill="#19f9d8" opacity="0.5"/><rect x="13" y="162.1" width="9" height="1.250" fill="#19f9d8" opacity="0.5"/><rect x="23" y="162.1" width="6" height="1.250" fill="#19f9d8" opacity="0.5"/><rect x="30" y="162.1" width="9" height="1.250" fill="#19f9d8" opacity="0.5"/><rect x="8" y="164.1" width="4" height="1.250" fill="#19f9d8" opacity="0.5"/><rect x="13" y="164.1" width="9" height="1.250" fill="#19f9d8" opacity="0.5"/><rect x="23" y="164.1" width="5" height="1.250" fill="#19f9d8" opacity="0.5"/><rect x="29" y="164.1" width="9" height="1.250" fill="#19f9d8" opacity="0.5"/><rect x="8" y="166.1" width="5" height="1.250" fill="#19f9d8" opacity="0.5"/><rect x="14" y="166.1" width="1" height="1.250" fill="#19f9d8" opacity="0.5"/><rect x="8" y="168.1" width="4" height="1.250" fill="#19f9d8" opacity="0.5"/><rect x="13" y="168.1" width="4" height="1.250" fill="#19f9d8" opacity="0.5"/><rect x="18" y="168.1" width="6" height="1.250" fill="#19f9d8" opacity="0.5"/><rect x="25" y="168.1" width="12" height="1.250" fill="#19f9d8" opacity="0.5"/><rect x="38" y="168.1" width="9" height="1.250" fill="#19f9d8" opacity="0.5"/><rect x="8" y="170.1" width="2" height="1.250" fill="#19f9d8" opacity="0.5"/><rect x="14" y="176.1" width="1" height="1.250" fill="#19f9d8" opacity="0.5"/><rect x="16" y="176.1" width="7" height="1.250" fill="#19f9d8" opacity="0.5"/><rect x="24" y="176.1" width="2" height="1.250" fill="#19f9d8" opacity="0.5"/><rect x="27" y="176.1" width="6" height="1.250" fill="#19f9d8" opacity="0.5"/><rect x="34" y="176.1" width="6" height="1.250" fill="#19f9d8" opacity="0.5"/><rect x="41" y="176.1" width="4" height="1.250" fill="#19f9d8" opacity="0.5"/><rect x="14" y="178.1" width="9" height="1.250" fill="#19f9d8" opacity="0.5"/><rect x="24" y="178.1" width="1" height="1.250" fill="#19f9d8" opacity="0.5"/><rect x="26" y="178.1" width="1" height="1.250" fill="#19f9d8" opacity="0.5"/><rect x="27" y="178.1" width="1" height="1.250" fill="#ffb86c" opacity="0.5"/><rect x="28" y="178.1" width="1" height="1.250" fill="#179fff" opacity="0.5"/><rect x="29" y="178.1" width="16" height="1.250" fill="#ffcc99" opacity="0.5"/><rect x="45" y="178.1" width="1" height="1.250" fill="#179fff" opacity="0.5"/><rect x="46" y="178.1" width="1" height="1.250" fill="#19f9d8" opacity="0.5"/><rect x="14" y="180.1" width="8" height="1.250" fill="#19f9d8" opacity="0.5"/><rect x="23" y="180.1" width="1" height="1.250" fill="#19f9d8" opacity="0.5"/><rect x="25" y="180.1" width="5" height="1.250" fill="#19f9d8" opacity="0.5"/><rect x="31" y="180.1" width="16" height="1.250" fill="#19f9d8" opacity="0.5"/><rect x="48" y="180.1" width="1" height="1.250" fill="#19f9d8" opacity="0.5"/><rect x="50" y="180.1" width="3" height="1.250" fill="#19f9d8" opacity="0.5"/><rect x="54" y="180.1" width="2" height="1.250" fill="#19f9d8" opacity="0.5"/><rect x="57" y="180.1" width="24" height="1.250" fill="#19f9d8" opacity="0.5"/><rect x="82" y="180.1" width="1" height="1.250" fill="#ffb86c" opacity="0.5"/><rect x="83" y="180.1" width="1" height="1.250" fill="#179fff" opacity="0.5"/><rect x="84" y="180.1" width="12" height="1.250" fill="#ffcc99" opacity="0.5"/><rect x="96" y="180.1" width="1" height="1.250" fill="#179fff" opacity="0.5"/><rect x="97" y="180.1" width="1" height="1.250" fill="#19f9d8" opacity="0.5"/><rect x="98" y="180.1" width="1" height="1.250" fill="#ffb86c" opacity="0.5"/><rect x="99" y="180.1" width="1" height="1.250" fill="#179fff" opacity="0.5"/><rect x="100" y="180.1" width="14" height="1.250" fill="#ffcc99" opacity="0.5"/><rect x="114" y="180.1" width="1" height="1.250" fill="#179fff" opacity="0.5"/><rect x="116" y="180.1" width="4" height="1.250" fill="#19f9d8" opacity="0.5"/><rect x="14" y="182.1" width="17" height="1.250" fill="#19f9d8" opacity="0.5"/><rect x="32" y="182.1" width="8" height="1.250" fill="#19f9d8" opacity="0.5"/><rect x="14" y="186.1" width="10" height="1.250" fill="#19f9d8" opacity="0.5"/><rect x="25" y="186.1" width="7" height="1.250" fill="#19f9d8" opacity="0.5"/><rect x="33" y="186.1" width="4" height="1.250" fill="#19f9d8" opacity="0.5"/><rect x="38" y="186.1" width="1" height="1.250" fill="#19f9d8" opacity="0.5"/><rect x="40" y="186.1" width="6" height="1.250" fill="#19f9d8" opacity="0.5"/><rect x="47" y="186.1" width="3" height="1.250" fill="#19f9d8" opacity="0.5"/><rect x="51" y="186.1" width="9" height="1.250" fill="#19f9d8" opacity="0.5"/><rect x="12" y="188.1" width="3" height="1.250" fill="#19f9d8" opacity="0.5"/><rect x="12" y="190.1" width="11" height="1.250" fill="#dcdcdc" opacity="0.5"/><rect x="24" y="190.1" width="1" height="1.250" fill="#dcdcdc" opacity="0.5"/><rect x="26" y="190.1" width="1" height="1.250" fill="#179fff" opacity="0.5"/><rect x="27" y="190.1" width="12" height="1.250" fill="#19f9d8" opacity="0.5"/><rect x="39" y="190.1" width="1" height="1.250" fill="#dcdcdc" opacity="0.5"/><rect x="41" y="190.1" width="10" height="1.250" fill="#19f9d8" opacity="0.5"/><rect x="51" y="190.1" width="1" height="1.250" fill="#179fff" opacity="0.5"/><rect x="10" y="192.1" width="1" height="1.250" fill="#da70d6" opacity="0.5"/><rect x="10" y="196.1" width="10" height="1.250" fill="#ffcc99" opacity="0.5"/><rect x="21" y="196.1" width="1" height="1.250" fill="#dcdcdc" opacity="0.5"/><rect x="23" y="196.1" width="1" height="1.250" fill="#da70d6" opacity="0.5"/><rect x="12" y="198.1" width="25" height="1.250" fill="#dcdcdc" opacity="0.5"/><rect x="12" y="200.1" width="27" height="1.250" fill="#dcdcdc" opacity="0.5"/><rect x="10" y="202.1" width="1" height="1.250" fill="#da70d6" opacity="0.5"/><rect x="8" y="204.1" width="1" height="1.250" fill="#ffd700" opacity="0.5"/><rect x="8" y="208.1" width="1" height="1.250" fill="#6f7379" opacity="0.600"/><rect x="10" y="208.1" width="7" height="1.250" fill="#6f7379" opacity="0.600"/><rect x="18" y="208.1" width="3" height="1.250" fill="#6f7379" opacity="0.600"/><rect x="22" y="208.1" width="2" height="1.250" fill="#6f7379" opacity="0.600"/><rect x="25" y="208.1" width="6" height="1.250" fill="#6f7379" opacity="0.600"/><rect x="32" y="208.1" width="4" height="1.250" fill="#6f7379" opacity="0.600"/><rect x="37" y="208.1" width="1" height="1.250" fill="#6f7379" opacity="0.600"/><rect x="8" y="210.1" width="8" height="1.250" fill="#ff4b82" opacity="0.5"/><rect x="17" y="210.1" width="15" height="1.250" fill="#19f9d8" opacity="0.5"/><rect x="33" y="210.1" width="14" height="1.250" fill="#19f9d8" opacity="0.5"/><rect x="48" y="210.1" width="1" height="1.250" fill="#ffd700" opacity="0.5"/><rect x="10" y="212.1" width="11" height="1.250" fill="#dcdcdc" opacity="0.5"/><rect x="22" y="212.1" width="12" height="1.250" fill="#19f9d8" opacity="0.5"/><rect x="35" y="212.1" width="1" height="1.250" fill="#da70d6" opacity="0.5"/><rect x="12" y="214.1" width="7" height="1.250" fill="#dcdcdc" opacity="0.5"/><rect x="20" y="214.1" width="1" height="1.250" fill="#dcdcdc" opacity="0.5"/><rect x="22" y="214.1" width="6" height="1.250" fill="#19f9d8" opacity="0.5"/><rect x="14" y="216.1" width="10" height="1.250" fill="#19f9d8" opacity="0.5"/><rect x="25" y="216.1" width="11" height="1.250" fill="#19f9d8" opacity="0.5"/><rect x="37" y="216.1" width="3" height="1.250" fill="#19f9d8" opacity="0.5"/><rect x="41" y="216.1" width="2" height="1.250" fill="#19f9d8" opacity="0.5"/><rect x="44" y="216.1" width="6" height="1.250" fill="#19f9d8" opacity="0.5"/><rect x="51" y="216.1" width="4" height="1.250" fill="#19f9d8" opacity="0.5"/><rect x="56" y="216.1" width="1" height="1.250" fill="#19f9d8" opacity="0.5"/><rect x="58" y="216.1" width="1" height="1.250" fill="#19f9d8" opacity="0.5"/><rect x="59" y="216.1" width="1" height="1.250" fill="#ffb86c" opacity="0.5"/><rect x="60" y="216.1" width="1" height="1.250" fill="#179fff" opacity="0.5"/><rect x="61" y="216.1" width="17" height="1.250" fill="#ffcc99" opacity="0.5"/><rect x="78" y="216.1" width="1" height="1.250" fill="#179fff" opacity="0.5"/><rect x="79" y="216.1" width="5" height="1.250" fill="#19f9d8" opacity="0.5"/><rect x="14" y="218.1" width="11" height="1.250" fill="#19f9d8" opacity="0.5"/><rect x="26" y="218.1" width="8" height="1.250" fill="#19f9d8" opacity="0.5"/><rect x="35" y="218.1" width="1" height="1.250" fill="#19f9d8" opacity="0.5"/><rect x="14" y="222.1" width="1" height="1.250" fill="#19f9d8" opacity="0.5"/><rect x="16" y="222.1" width="3" height="1.250" fill="#19f9d8" opacity="0.5"/><rect x="20" y="222.1" width="3" height="1.250" fill="#19f9d8" opacity="0.5"/><rect x="24" y="222.1" width="5" height="1.250" fill="#19f9d8" opacity="0.5"/><rect x="14" y="224.1" width="6" height="1.250" fill="#19f9d8" opacity="0.5"/><rect x="21" y="224.1" width="1" height="1.250" fill="#19f9d8" opacity="0.5"/><rect x="23" y="224.1" width="11" height="1.250" fill="#19f9d8" opacity="0.5"/><rect x="35" y="224.1" width="13" height="1.250" fill="#19f9d8" opacity="0.5"/><rect x="49" y="224.1" width="4" height="1.250" fill="#19f9d8" opacity="0.5"/><rect x="14" y="226.1" width="6" height="1.250" fill="#19f9d8" opacity="0.5"/><rect x="21" y="226.1" width="1" height="1.250" fill="#19f9d8" opacity="0.5"/><rect x="23" y="226.1" width="13" height="1.250" fill="#19f9d8" opacity="0.5"/><rect x="14" y="230.1" width="14" height="1.250" fill="#19f9d8" opacity="0.5"/><rect x="29" y="230.1" width="1" height="1.250" fill="#19f9d8" opacity="0.5"/><rect x="31" y="230.1" width="2" height="1.250" fill="#19f9d8" opacity="0.5"/><rect x="8" y="232.1" width="6" height="1.250" fill="#19f9d8" opacity="0.5"/><rect x="15" y="232.1" width="16" height="1.250" fill="#19f9d8" opacity="0.5"/><rect x="8" y="234.1" width="4" height="1.250" fill="#19f9d8" opacity="0.5"/><rect x="13" y="234.1" width="4" height="1.250" fill="#19f9d8" opacity="0.5"/><rect x="18" y="234.1" width="4" height="1.250" fill="#19f9d8" opacity="0.5"/><rect x="23" y="234.1" width="18" height="1.250" fill="#19f9d8" opacity="0.5"/><rect x="42" y="234.1" width="1" height="1.250" fill="#19f9d8" opacity="0.5"/><rect x="44" y="234.1" width="20" height="1.250" fill="#19f9d8" opacity="0.5"/><rect x="64" y="234.1" width="1" height="1.250" fill="#ffb86c" opacity="0.5"/><rect x="65" y="234.1" width="1" height="1.250" fill="#179fff" opacity="0.5"/><rect x="66" y="234.1" width="15" height="1.250" fill="#ffcc99" opacity="0.5"/><rect x="81" y="234.1" width="1" height="1.250" fill="#179fff" opacity="0.5"/><rect x="83" y="234.1" width="16" height="1.250" fill="#19f9d8" opacity="0.5"/><rect x="99" y="234.1" width="1" height="1.250" fill="#ffb86c" opacity="0.5"/><rect x="100" y="234.1" width="1" height="1.250" fill="#179fff" opacity="0.5"/><rect x="101" y="234.1" width="13" height="1.250" fill="#ffcc99" opacity="0.5"/><rect x="114" y="234.1" width="1" height="1.250" fill="#179fff" opacity="0.5"/><rect x="115" y="234.1" width="5" height="1.250" fill="#19f9d8" opacity="0.5"/><rect x="8" y="236.1" width="4" height="1.250" fill="#19f9d8" opacity="0.5"/><rect x="13" y="236.1" width="9" height="1.250" fill="#19f9d8" opacity="0.5"/><rect x="23" y="236.1" width="6" height="1.250" fill="#19f9d8" opacity="0.5"/><rect x="30" y="236.1" width="9" height="1.250" fill="#19f9d8" opacity="0.5"/><rect x="8" y="238.1" width="4" height="1.250" fill="#19f9d8" opacity="0.5"/><rect x="13" y="238.1" width="9" height="1.250" fill="#19f9d8" opacity="0.5"/><rect x="23" y="238.1" width="5" height="1.250" fill="#19f9d8" opacity="0.5"/><rect x="29" y="238.1" width="9" height="1.250" fill="#19f9d8" opacity="0.5"/><rect x="8" y="240.1" width="5" height="1.250" fill="#19f9d8" opacity="0.5"/><rect x="14" y="240.1" width="1" height="1.250" fill="#19f9d8" opacity="0.5"/><rect x="8" y="242.1" width="4" height="1.250" fill="#19f9d8" opacity="0.5"/><rect x="13" y="242.1" width="4" height="1.250" fill="#19f9d8" opacity="0.5"/><rect x="18" y="242.1" width="6" height="1.250" fill="#19f9d8" opacity="0.5"/><rect x="25" y="242.1" width="12" height="1.250" fill="#19f9d8" opacity="0.5"/><rect x="38" y="242.1" width="9" height="1.250" fill="#19f9d8" opacity="0.5"/><rect x="8" y="244.1" width="2" height="1.250" fill="#19f9d8" opacity="0.5"/><rect x="14" y="250.1" width="1" height="1.250" fill="#19f9d8" opacity="0.5"/><rect x="16" y="250.1" width="7" height="1.250" fill="#19f9d8" opacity="0.5"/><rect x="24" y="250.1" width="2" height="1.250" fill="#19f9d8" opacity="0.5"/><rect x="27" y="250.1" width="6" height="1.250" fill="#19f9d8" opacity="0.5"/><rect x="34" y="250.1" width="6" height="1.250" fill="#19f9d8" opacity="0.5"/><rect x="41" y="250.1" width="4" height="1.250" fill="#19f9d8" opacity="0.5"/><rect x="14" y="252.1" width="9" height="1.250" fill="#19f9d8" opacity="0.5"/><rect x="24" y="252.1" width="1" height="1.250" fill="#19f9d8" opacity="0.5"/><rect x="26" y="252.1" width="1" height="1.250" fill="#19f9d8" opacity="0.5"/><rect x="27" y="252.1" width="1" height="1.250" fill="#ffb86c" opacity="0.5"/><rect x="28" y="252.1" width="1" height="1.250" fill="#179fff" opacity="0.5"/><rect x="29" y="252.1" width="16" height="1.250" fill="#ffcc99" opacity="0.5"/><rect x="45" y="252.1" width="1" height="1.250" fill="#179fff" opacity="0.5"/><rect x="46" y="252.1" width="1" height="1.250" fill="#19f9d8" opacity="0.5"/><rect x="14" y="254.1" width="8" height="1.250" fill="#19f9d8" opacity="0.5"/><rect x="23" y="254.1" width="1" height="1.250" fill="#19f9d8" opacity="0.5"/><rect x="25" y="254.1" width="5" height="1.250" fill="#19f9d8" opacity="0.5"/><rect x="31" y="254.1" width="16" height="1.250" fill="#19f9d8" opacity="0.5"/><rect x="48" y="254.1" width="1" height="1.250" fill="#19f9d8" opacity="0.5"/><rect x="50" y="254.1" width="3" height="1.250" fill="#19f9d8" opacity="0.5"/><rect x="54" y="254.1" width="2" height="1.250" fill="#19f9d8" opacity="0.5"/><rect x="57" y="254.1" width="24" height="1.250" fill="#19f9d8" opacity="0.5"/><rect x="82" y="254.1" width="1" height="1.250" fill="#ffb86c" opacity="0.5"/><rect x="83" y="254.1" width="1" height="1.250" fill="#179fff" opacity="0.5"/><rect x="84" y="254.1" width="12" height="1.250" fill="#ffcc99" opacity="0.5"/><rect x="96" y="254.1" width="1" height="1.250" fill="#179fff" opacity="0.5"/><rect x="97" y="254.1" width="1" height="1.250" fill="#19f9d8" opacity="0.5"/><rect x="98" y="254.1" width="1" height="1.250" fill="#ffb86c" opacity="0.5"/><rect x="99" y="254.1" width="1" height="1.250" fill="#179fff" opacity="0.5"/><rect x="100" y="254.1" width="14" height="1.250" fill="#ffcc99" opacity="0.5"/><rect x="114" y="254.1" width="1" height="1.250" fill="#179fff" opacity="0.5"/><rect x="116" y="254.1" width="4" height="1.250" fill="#19f9d8" opacity="0.5"/><rect x="14" y="256.1" width="17" height="1.250" fill="#19f9d8" opacity="0.5"/><rect x="32" y="256.1" width="8" height="1.250" fill="#19f9d8" opacity="0.5"/><rect x="14" y="260.1" width="10" height="1.250" fill="#19f9d8" opacity="0.5"/><rect x="25" y="260.1" width="7" height="1.250" fill="#19f9d8" opacity="0.5"/><rect x="33" y="260.1" width="4" height="1.250" fill="#19f9d8" opacity="0.5"/><rect x="38" y="260.1" width="1" height="1.250" fill="#19f9d8" opacity="0.5"/><rect x="40" y="260.1" width="6" height="1.250" fill="#19f9d8" opacity="0.5"/><rect x="47" y="260.1" width="3" height="1.250" fill="#19f9d8" opacity="0.5"/><rect x="51" y="260.1" width="9" height="1.250" fill="#19f9d8" opacity="0.5"/><rect x="12" y="262.1" width="3" height="1.250" fill="#19f9d8" opacity="0.5"/><rect x="12" y="264.1" width="11" height="1.250" fill="#dcdcdc" opacity="0.5"/><rect x="24" y="264.1" width="1" height="1.250" fill="#dcdcdc" opacity="0.5"/><rect x="26" y="264.1" width="1" height="1.250" fill="#179fff" opacity="0.5"/><rect x="27" y="264.1" width="12" height="1.250" fill="#19f9d8" opacity="0.5"/><rect x="39" y="264.1" width="1" height="1.250" fill="#dcdcdc" opacity="0.5"/><rect x="41" y="264.1" width="10" height="1.250" fill="#19f9d8" opacity="0.5"/><rect x="51" y="264.1" width="1" height="1.250" fill="#179fff" opacity="0.5"/><rect x="10" y="266.1" width="1" height="1.250" fill="#da70d6" opacity="0.5"/><rect x="10" y="270.1" width="10" height="1.250" fill="#ffcc99" opacity="0.5"/><rect x="21" y="270.1" width="1" height="1.250" fill="#dcdcdc" opacity="0.5"/><rect x="23" y="270.1" width="1" height="1.250" fill="#da70d6" opacity="0.5"/><rect x="12" y="272.1" width="25" height="1.250" fill="#dcdcdc" opacity="0.5"/><rect x="12" y="274.1" width="27" height="1.250" fill="#dcdcdc" opacity="0.5"/><rect x="10" y="276.1" width="1" height="1.250" fill="#da70d6" opacity="0.5"/><rect x="8" y="278.1" width="1" height="1.250" fill="#ffd700" opacity="0.5"/><rect x="8" y="282.1" width="1" height="1.250" fill="#6f7379" opacity="0.600"/><rect x="10" y="282.1" width="6" height="1.250" fill="#6f7379" opacity="0.600"/><rect x="17" y="282.1" width="7" height="1.250" fill="#6f7379" opacity="0.600"/><rect x="8" y="284.1" width="8" height="1.250" fill="#ff4b82" opacity="0.5"/><rect x="17" y="284.1" width="15" height="1.250" fill="#19f9d8" opacity="0.5"/><rect x="33" y="284.1" width="16" height="1.250" fill="#19f9d8" opacity="0.5"/><rect x="50" y="284.1" width="1" height="1.250" fill="#ffd700" opacity="0.5"/><rect x="10" y="286.1" width="11" height="1.250" fill="#dcdcdc" opacity="0.5"/><rect x="22" y="286.1" width="12" height="1.250" fill="#19f9d8" opacity="0.5"/><rect x="35" y="286.1" width="1" height="1.250" fill="#da70d6" opacity="0.5"/><rect x="12" y="288.1" width="7" height="1.250" fill="#dcdcdc" opacity="0.5"/><rect x="20" y="288.1" width="1" height="1.250" fill="#dcdcdc" opacity="0.5"/><rect x="22" y="288.1" width="6" height="1.250" fill="#19f9d8" opacity="0.5"/><rect x="14" y="290.1" width="10" height="1.250" fill="#19f9d8" opacity="0.5"/><rect x="25" y="290.1" width="8" height="1.250" fill="#19f9d8" opacity="0.5"/><rect x="34" y="290.1" width="3" height="1.250" fill="#19f9d8" opacity="0.5"/><rect x="38" y="290.1" width="7" height="1.250" fill="#19f9d8" opacity="0.5"/><rect x="46" y="290.1" width="2" height="1.250" fill="#19f9d8" opacity="0.5"/><rect x="49" y="290.1" width="2" height="1.250" fill="#19f9d8" opacity="0.5"/><rect x="52" y="290.1" width="9" height="1.250" fill="#19f9d8" opacity="0.5"/><rect x="14" y="292.1" width="11" height="1.250" fill="#19f9d8" opacity="0.5"/><rect x="26" y="292.1" width="8" height="1.250" fill="#19f9d8" opacity="0.5"/><rect x="35" y="292.1" width="2" height="1.250" fill="#19f9d8" opacity="0.5"/><rect x="14" y="296.1" width="15" height="1.250" fill="#19f9d8" opacity="0.5"/><rect x="30" y="296.1" width="1" height="1.250" fill="#19f9d8" opacity="0.5"/><rect x="32" y="296.1" width="33" height="1.250" fill="#19f9d8" opacity="0.5"/><rect x="14" y="300.1" width="10" height="1.250" fill="#19f9d8" opacity="0.5"/><rect x="25" y="300.1" width="2" height="1.250" fill="#19f9d8" opacity="0.5"/><rect x="14" y="302.1" width="10" height="1.250" fill="#19f9d8" opacity="0.5"/><rect x="25" y="302.1" width="4" height="1.250" fill="#19f9d8" opacity="0.5"/><rect x="30" y="302.1" width="3" height="1.250" fill="#19f9d8" opacity="0.5"/><rect x="34" y="302.1" width="7" height="1.250" fill="#19f9d8" opacity="0.5"/><rect x="42" y="302.1" width="10" height="1.250" fill="#19f9d8" opacity="0.5"/><rect x="53" y="302.1" width="9" height="1.250" fill="#19f9d8" opacity="0.5"/><rect x="63" y="302.1" width="4" height="1.250" fill="#19f9d8" opacity="0.5"/><rect x="14" y="304.1" width="10" height="1.250" fill="#19f9d8" opacity="0.5"/><rect x="25" y="304.1" width="42" height="1.250" fill="#19f9d8" opacity="0.5"/><rect x="14" y="308.1" width="10" height="1.250" fill="#19f9d8" opacity="0.5"/><rect x="25" y="308.1" width="8" height="1.250" fill="#19f9d8" opacity="0.5"/><rect x="34" y="308.1" width="7" height="1.250" fill="#19f9d8" opacity="0.5"/><rect x="14" y="310.1" width="7" height="1.250" fill="#19f9d8" opacity="0.5"/><rect x="22" y="310.1" width="3" height="1.250" fill="#19f9d8" opacity="0.5"/><rect x="26" y="310.1" width="5" height="1.250" fill="#19f9d8" opacity="0.5"/><rect x="32" y="310.1" width="2" height="1.250" fill="#19f9d8" opacity="0.5"/><rect x="35" y="310.1" width="4" height="1.250" fill="#19f9d8" opacity="0.5"/><rect x="14" y="314.1" width="10" height="1.250" fill="#19f9d8" opacity="0.5"/><rect x="25" y="314.1" width="2" height="1.250" fill="#19f9d8" opacity="0.5"/><rect x="14" y="316.1" width="10" height="1.250" fill="#19f9d8" opacity="0.5"/><rect x="25" y="316.1" width="3" height="1.250" fill="#19f9d8" opacity="0.5"/><rect x="29" y="316.1" width="3" height="1.250" fill="#19f9d8" opacity="0.5"/><rect x="33" y="316.1" width="3" height="1.250" fill="#19f9d8" opacity="0.5"/><rect x="37" y="316.1" width="8" height="1.250" fill="#19f9d8" opacity="0.5"/><rect x="46" y="316.1" width="5" height="1.250" fill="#19f9d8" opacity="0.5"/><rect x="14" y="318.1" width="10" height="1.250" fill="#19f9d8" opacity="0.5"/><rect x="25" y="318.1" width="1" height="1.250" fill="#19f9d8" opacity="0.5"/><rect x="28" y="318.1" width="16" height="1.250" fill="#19f9d8" opacity="0.5"/><rect x="45" y="318.1" width="1" height="1.250" fill="#19f9d8" opacity="0.5"/><rect x="47" y="318.1" width="4" height="1.250" fill="#19f9d8" opacity="0.5"/><rect x="52" y="318.1" width="16" height="1.250" fill="#19f9d8" opacity="0.5"/><rect x="14" y="320.1" width="10" height="1.250" fill="#19f9d8" opacity="0.5"/><rect x="25" y="320.1" width="1" height="1.250" fill="#19f9d8" opacity="0.5"/><rect x="28" y="320.1" width="7" height="1.250" fill="#19f9d8" opacity="0.5"/><rect x="36" y="320.1" width="3" height="1.250" fill="#19f9d8" opacity="0.5"/><rect x="40" y="320.1" width="6" height="1.250" fill="#19f9d8" opacity="0.5"/><rect x="47" y="320.1" width="16" height="1.250" fill="#19f9d8" opacity="0.5"/><rect x="64" y="320.1" width="6" height="1.250" fill="#19f9d8" opacity="0.5"/><rect x="14" y="322.1" width="10" height="1.250" fill="#19f9d8" opacity="0.5"/><rect x="25" y="322.1" width="2" height="1.250" fill="#19f9d8" opacity="0.5"/><rect x="14" y="324.1" width="10" height="1.250" fill="#19f9d8" opacity="0.5"/><rect x="25" y="324.1" width="3" height="1.250" fill="#19f9d8" opacity="0.5"/><rect x="29" y="324.1" width="4" height="1.250" fill="#19f9d8" opacity="0.5"/><rect x="34" y="324.1" width="12" height="1.250" fill="#19f9d8" opacity="0.5"/><rect x="14" y="326.1" width="10" height="1.250" fill="#19f9d8" opacity="0.5"/><rect x="25" y="326.1" width="1" height="1.250" fill="#19f9d8" opacity="0.5"/><rect x="28" y="326.1" width="9" height="1.250" fill="#19f9d8" opacity="0.5"/><rect x="38" y="326.1" width="15" height="1.250" fill="#19f9d8" opacity="0.5"/><rect x="54" y="326.1" width="30" height="1.250" fill="#19f9d8" opacity="0.5"/><rect x="85" y="326.1" width="16" height="1.250" fill="#19f9d8" opacity="0.5"/><rect x="102" y="326.1" width="6" height="1.250" fill="#19f9d8" opacity="0.5"/><rect x="14" y="328.1" width="10" height="1.250" fill="#19f9d8" opacity="0.5"/><rect x="25" y="328.1" width="1" height="1.250" fill="#19f9d8" opacity="0.5"/><rect x="28" y="328.1" width="9" height="1.250" fill="#19f9d8" opacity="0.5"/><rect x="38" y="328.1" width="7" height="1.250" fill="#19f9d8" opacity="0.5"/><rect x="46" y="328.1" width="11" height="1.250" fill="#19f9d8" opacity="0.5"/><rect x="58" y="328.1" width="16" height="1.250" fill="#19f9d8" opacity="0.5"/><rect x="14" y="330.1" width="10" height="1.250" fill="#19f9d8" opacity="0.5"/><rect x="25" y="330.1" width="2" height="1.250" fill="#19f9d8" opacity="0.5"/><rect x="12" y="332.1" width="3" height="1.250" fill="#19f9d8" opacity="0.5"/><rect x="12" y="334.1" width="11" height="1.250" fill="#dcdcdc" opacity="0.5"/><rect x="24" y="334.1" width="1" height="1.250" fill="#dcdcdc" opacity="0.5"/><rect x="26" y="334.1" width="1" height="1.250" fill="#179fff" opacity="0.5"/><rect x="27" y="334.1" width="12" height="1.250" fill="#19f9d8" opacity="0.5"/><rect x="39" y="334.1" width="1" height="1.250" fill="#dcdcdc" opacity="0.5"/><rect x="41" y="334.1" width="10" height="1.250" fill="#19f9d8" opacity="0.5"/><rect x="51" y="334.1" width="1" height="1.250" fill="#179fff" opacity="0.5"/><rect x="10" y="336.1" width="1" height="1.250" fill="#da70d6" opacity="0.5"/></svg><div class="ovr"></div></div>
<div id="statusbar"><svg style="left:1px;top:2.5px" width="20" height="20" viewBox="0 0 20 20" ><path d="M2 5.6L8 11.800L2 18M15.600 2.200L10.400 7.400L15.600 12.600" fill="none" stroke="#e8e8e8" stroke-width="1.75"/></svg><svg style="left:40px;top:2px" width="22" height="22" viewBox="0 0 22 22" ><circle cx="4.6" cy="4" r="2.2" fill="none" stroke="#e8e8e8" stroke-width="1.75"/><circle cx="4.6" cy="17.600" r="2.200" fill="none" stroke="#e8e8e8" stroke-width="1.75"/><circle cx="11.400" cy="6.400" r="2.200" fill="none" stroke="#e8e8e8" stroke-width="1.75"/><path d="M4.600 6.200v9.200M11.400 8.600c0 3-3 3.800-6.800 4.600" fill="none" stroke="#e8e8e8" stroke-width="1.75"/><circle cx="14.400" cy="15.400" r="5.200" fill="#e8e8e8"/><path d="M14.400 12.400v6M11.800 13.900l5.200 3M17 13.900l-5.200 3" stroke="#222" stroke-width="1.200"/></svg><span class="st" style="left:63.90px;font-size:15px;letter-spacing:0.160px">main*</span><svg style="left:111px;top:2.7px" width="20" height="20" viewBox="0 0 20 20" ><path d="M8.400 16.700A6.900 6.900 0 0 1 10.400 3.200M8.200 0.800L11 3.300L8.200 5.900M11.600 3.300A6.900 6.900 0 0 1 9.600 16.800M11.800 14.100L9 16.700L11.800 19.200" fill="none" stroke="#e8e8e8" stroke-width="1.75"/></svg><svg style="left:150px;top:2.5px" width="20" height="20" viewBox="0 0 20 20" ><circle cx="10" cy="10" r="8.200" fill="none" stroke="#e8e8e8" stroke-width="1.75"/><path d="M6.600 6.600l6.800 6.800M13.400 6.600l-6.800 6.800" fill="none" stroke="#e8e8e8" stroke-width="1.75"/></svg><span class="st" style="left:175px">0</span><svg style="left:187px;top:2.5px" width="20" height="20" viewBox="0 0 20 20" ><path d="M10 2.200L18.400 17.400H1.600z" stroke-linejoin="round" fill="none" stroke="#e8e8e8" stroke-width="1.75"/><path d="M10 7.600v5.200M10 14.400v1.600" fill="none" stroke="#e8e8e8" stroke-width="1.75"/></svg><span class="st" style="left:211.6px">0</span><span class="st" style="left:2950.70px;font-size:15px;transform:scaleX(0.9481);transform-origin:0 50%">Ln 26, Col 39</span><span class="st" style="left:3055.20px;font-size:15px;transform:scaleX(0.9143);transform-origin:0 50%">Spaces: 2</span><span class="st" style="left:3136.40px;font-size:15px;transform:scaleX(0.9294);transform-origin:0 50%">UTF-8</span><span class="st" style="left:3196.10px;font-size:15px;transform:scaleX(0.8220);transform-origin:0 50%">CRLF</span><span class="st" style="left:3250.50px;font-size:15px;transform:scaleX(1.0925);transform-origin:0 50%">{ }</span><span class="st" style="left:3276.60px;font-size:15px;letter-spacing:-0.198px">Terraform</span><svg style="left:3358.5px;top:3px" width="23" height="21" viewBox="0 0 23 21" ><path d="M11.500 5.400c-1-2.600-3-3.400-5.400-3.400S2.400 3.600 2.400 6.800v2.400C1.400 10.200 1 11.200 1 12.600c0 3.600 5 6.400 10.500 6.400S22 16.200 22 12.600c0-1.400-.4-2.400-1.400-3.400V6.800c0-3.200-1.300-4.800-3.700-4.800s-4.400.8-5.400 3.400z" fill="#e8e8e8"/><ellipse cx="7" cy="6" rx="2.600" ry="2.800" fill="#222"/><ellipse cx="16" cy="6" rx="2.600" ry="2.800" fill="#222"/><path d="M4.600 11.200h13.800v4.600c-2 1.400-4.400 2-6.900 2s-4.900-.6-6.900-2z" fill="#222"/><rect x="8" y="12" width="1.800" height="3.600" rx="0.900" fill="#e8e8e8"/><rect x="13.200" y="12" width="1.800" height="3.600" rx="0.900" fill="#e8e8e8"/></svg><svg style="left:3400px;top:3px" width="20" height="22" viewBox="0 0 20 22" ><path d="M10 2.200a5.800 5.800 0 0 0-5.800 5.800v4.600L2.400 15.800H17.600L15.800 12.600V8A5.800 5.800 0 0 0 10 2.200zM7.800 16.200a2.200 2.200 0 0 0 4.400 0" stroke-linejoin="round" fill="none" stroke="#e8e8e8" stroke-width="1.75"/></svg></div>
<div id="strip1"></div><div id="strip2"></div>
</div>
</body></html>
